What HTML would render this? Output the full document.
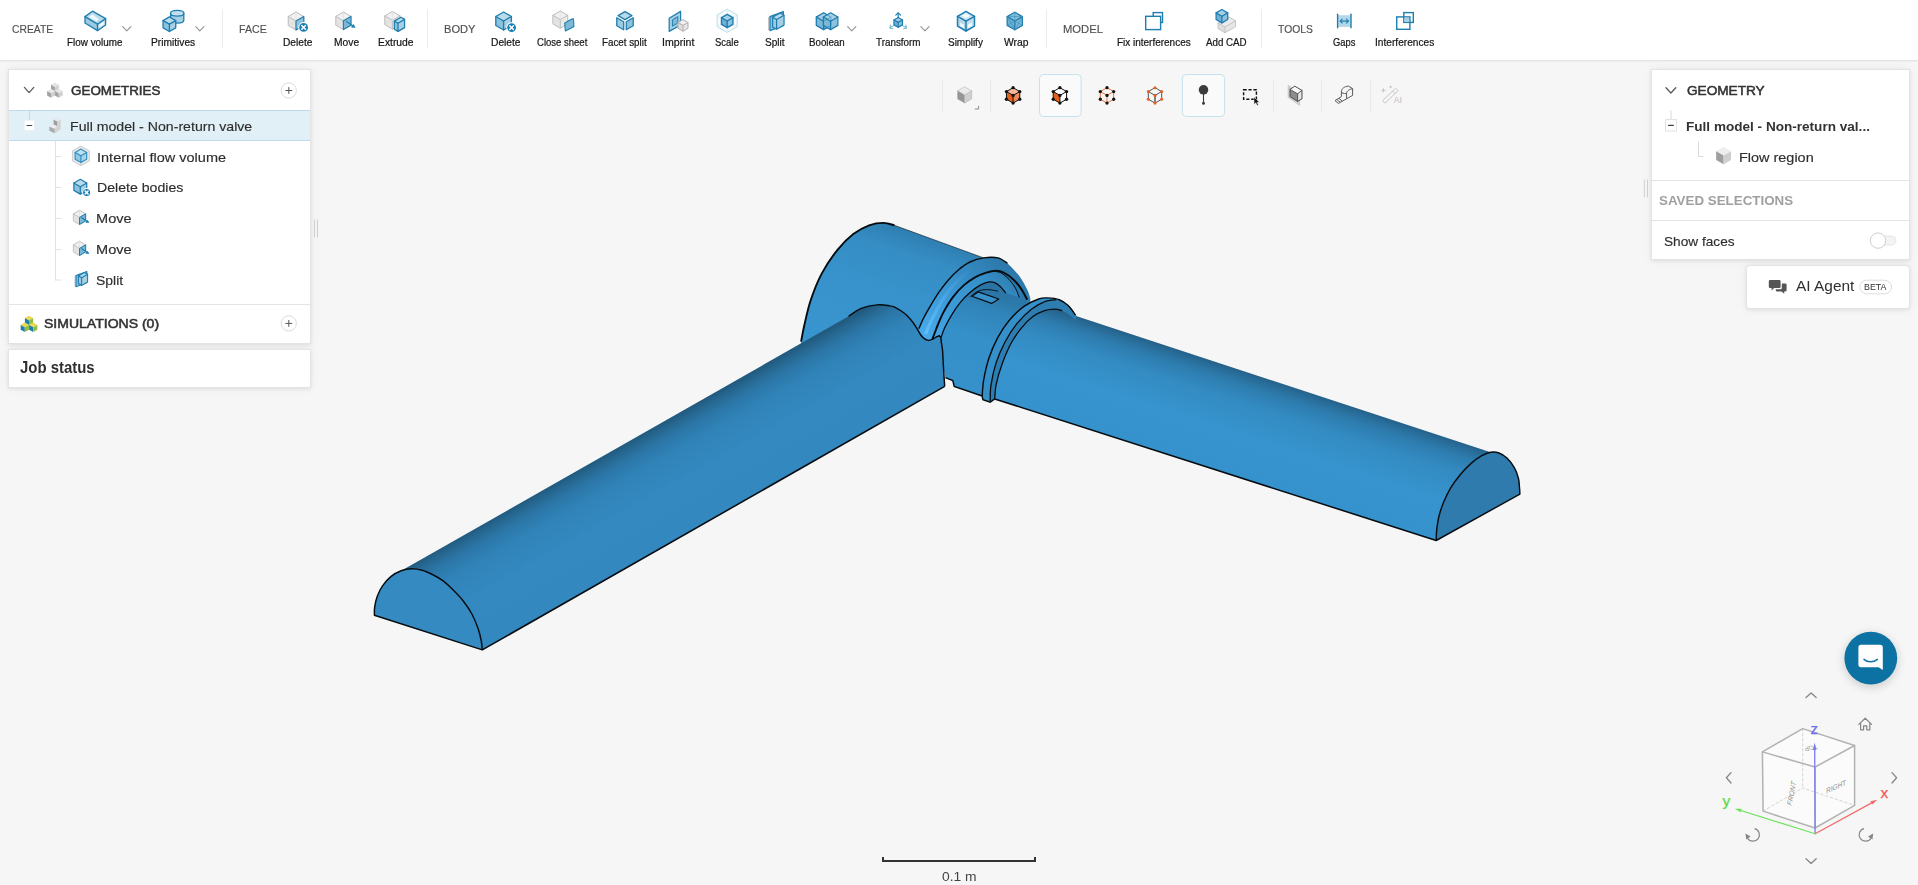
<!DOCTYPE html>
<html>
<head>
<meta charset="utf-8">
<title>CAD</title>
<style>
html,body{margin:0;padding:0;}
body{width:1918px;height:885px;overflow:hidden;background:#f6f6f6;font-family:"Liberation Sans",sans-serif;color:#333;position:relative;}
.abs{position:absolute;}
#toolbar{position:absolute;left:0;top:0;width:1918px;height:60px;background:#fff;box-shadow:0 1px 2px rgba(0,0,0,0.10);}
.grp{position:absolute;top:22px;font-size:11px;line-height:14px;color:#505050;-webkit-text-stroke:0.15px #505050;white-space:nowrap;}
.tl{position:absolute;top:36px;font-size:10px;line-height:13px;color:#151515;-webkit-text-stroke:0.2px #151515;white-space:nowrap;}
.tsep{position:absolute;top:9px;width:1px;height:39px;background:#ebebeb;}
.ico{position:absolute;overflow:visible;}
.panel{position:absolute;background:#fff;border:1px solid #e4e4e4;box-shadow:0 1px 4px rgba(0,0,0,0.09),0 0 14px rgba(0,0,0,0.035);box-sizing:border-box;}
.t13{position:absolute;font-size:13.3px;line-height:16px;white-space:nowrap;color:#2e2e2e;-webkit-text-stroke:0.15px #2e2e2e;}
.sb{color:#333;-webkit-text-stroke:0.55px #333;}
.hl{position:absolute;height:1px;background:#e4e4e4;}
.vl{position:absolute;width:1px;background:#dcdcdc;}
</style>
</head>
<body>

<!-- ============ 3D MODEL ============ -->
<svg id="model" class="abs" style="left:0;top:0" width="1918" height="885" viewBox="0 0 1918 885">
<defs>
<linearGradient id="gL" gradientUnits="userSpaceOnUse" x1="700.0" y1="526.4" x2="647.0" y2="432.3">
<stop offset="0" stop-color="#3388bf"/><stop offset="0.45" stop-color="#3389c0"/><stop offset="0.72" stop-color="#3083b8"/><stop offset="0.86" stop-color="#2b76a7"/><stop offset="0.95" stop-color="#266790"/><stop offset="1" stop-color="#225b80"/></linearGradient>
<linearGradient id="gR" gradientUnits="userSpaceOnUse" x1="1200.0" y1="465.9" x2="1232.5" y2="366.4">
<stop offset="0" stop-color="#3692cc"/><stop offset="0.4" stop-color="#3794ce"/><stop offset="0.7" stop-color="#338bc2"/><stop offset="0.86" stop-color="#2d7cae"/><stop offset="0.95" stop-color="#286b97"/><stop offset="1" stop-color="#245e85"/></linearGradient>
<linearGradient id="gB" gradientUnits="userSpaceOnUse" x1="880.0" y1="380.0" x2="931.2" y2="223.2">
<stop offset="0" stop-color="#3995cf"/><stop offset="0.5" stop-color="#3893cc"/><stop offset="0.78" stop-color="#358dc4"/><stop offset="0.9" stop-color="#2f80b3"/><stop offset="0.97" stop-color="#296e9b"/><stop offset="1" stop-color="#256289"/></linearGradient>
<linearGradient id="gN" gradientUnits="userSpaceOnUse" x1="960.0" y1="385.0" x2="991.0" y2="289.9">
<stop offset="0" stop-color="#3691cb"/><stop offset="0.5" stop-color="#3590c9"/><stop offset="0.8" stop-color="#3085ba"/><stop offset="1" stop-color="#2a74a3"/></linearGradient>
<linearGradient id="gC" gradientUnits="userSpaceOnUse" x1="925" y1="335" x2="1000" y2="258">
<stop offset="0" stop-color="#48a9ea"/><stop offset="0.35" stop-color="#3d9bd9"/><stop offset="0.7" stop-color="#3389c0"/><stop offset="1" stop-color="#2c78a9"/></linearGradient>
<linearGradient id="gF" gradientUnits="userSpaceOnUse" x1="936" y1="338" x2="1000" y2="270">
<stop offset="0" stop-color="#43a3e4"/><stop offset="0.4" stop-color="#3b99d6"/><stop offset="0.8" stop-color="#3590c9"/><stop offset="1" stop-color="#2f80b4"/></linearGradient>
<linearGradient id="gN2" gradientUnits="userSpaceOnUse" x1="985" y1="282" x2="980" y2="312">
<stop offset="0" stop-color="#2a73a3"/><stop offset="0.45" stop-color="#2b78aa"/><stop offset="1" stop-color="#3389c0" stop-opacity="0"/></linearGradient>
<linearGradient id="gH" gradientUnits="userSpaceOnUse" x1="926" y1="334" x2="972" y2="269">
<stop offset="0" stop-color="#62c0f8" stop-opacity="0.95"/><stop offset="0.5" stop-color="#52b2ee" stop-opacity="0.55"/><stop offset="1" stop-color="#48a9ea" stop-opacity="0"/></linearGradient>
</defs>
<path d="M801.1,341.6 C801.6,339.0 802.6,332.7 804.2,325.8 C805.8,318.9 807.7,309.2 810.6,300.5 C813.5,291.8 817.2,282.1 821.7,273.6 C826.2,265.2 832.2,256.4 837.5,249.8 C842.8,243.2 848.0,238.1 853.3,234.0 C858.6,229.9 864.1,227.2 869.1,225.3 C874.1,223.5 879.2,222.9 883.4,222.9 C887.6,222.9 892.6,224.9 894.4,225.3 L983.7,257.9 C981.4,258.6 974.2,260.0 970.0,262.0 C965.8,264.0 961.9,267.0 958.3,270.0 C954.7,273.0 951.6,276.3 948.4,279.9 C945.2,283.5 942.3,287.3 939.3,291.7 C936.3,296.1 932.9,301.7 930.3,306.1 C927.7,310.5 925.4,314.4 923.5,318.2 C921.6,322.0 919.6,327.0 918.8,328.8 L927.7,340.0 L900.0,360.0 L801.0,360.0 Z" fill="url(#gB)"/>
<path d="M801.1,341.6 C801.6,339.0 802.6,332.7 804.2,325.8 C805.8,318.9 807.7,309.2 810.6,300.5 C813.5,291.8 817.2,282.1 821.7,273.6 C826.2,265.2 832.2,256.4 837.5,249.8 C842.8,243.2 848.0,238.1 853.3,234.0 C858.6,229.9 864.1,227.2 869.1,225.3 C874.1,223.5 879.2,222.9 883.4,222.9 C887.6,222.9 892.6,224.9 894.4,225.3" fill="none" stroke="#060c10" stroke-width="1.9"/>
<path d="M894.4,225.3 L983.7,257.9" fill="none" stroke="#060c10" stroke-width="1" opacity="0.55"/>
<path d="M918.8,328.8 C919.6,327.0 921.6,322.0 923.5,318.2 C925.4,314.4 927.7,310.5 930.3,306.1 C932.9,301.7 936.3,296.1 939.3,291.7 C942.3,287.3 945.2,283.5 948.4,279.9 C951.6,276.3 954.7,273.0 958.3,270.0 C961.9,267.0 965.8,264.0 970.0,262.0 C974.2,260.0 979.0,258.6 983.7,257.9 C988.4,257.2 994.0,257.0 998.0,257.9 C1002.0,258.8 1004.0,260.4 1007.5,263.4 C1011.0,266.4 1016.0,271.7 1019.3,276.1 C1022.6,280.5 1025.3,285.8 1027.2,289.6 C1029.1,293.4 1029.9,297.4 1030.4,299.0 L1030.0,330.0 L940.0,350.0 L912.0,346.0 Z" fill="url(#gC)"/>
<path d="M925.6,334.0 C926.2,332.4 928.0,327.8 929.5,324.5 C931.0,321.2 932.5,318.3 934.5,314.5 C936.5,310.7 938.8,305.8 941.5,301.5 C944.2,297.2 947.2,292.5 950.5,288.5 C953.8,284.5 957.4,280.7 961.0,277.5 C964.6,274.3 970.2,270.8 972.0,269.5" fill="none" stroke="url(#gH)" stroke-width="3.2" stroke-linecap="butt"/>
<path d="M932.4,339.0 C932.9,337.6 934.6,333.3 935.6,330.6 C936.6,327.9 937.2,326.2 938.6,323.0 C940.0,319.8 941.4,315.9 943.8,311.6 C946.2,307.3 949.6,301.5 952.9,297.1 C956.2,292.7 959.9,288.7 963.7,285.4 C967.5,282.1 971.7,279.3 975.5,277.2 C979.3,275.1 982.9,273.8 986.3,272.7 C989.6,271.6 992.6,270.7 995.6,270.7 C998.6,270.7 1001.3,271.3 1004.3,272.9 C1007.3,274.4 1010.9,277.2 1013.8,280.0 C1016.7,282.8 1019.5,286.3 1021.7,289.6 C1023.9,292.9 1026.3,298.1 1027.2,299.8 L1026.0,330.0 L940.0,345.0 Z" fill="url(#gF)"/>
<path d="M986.3,272.7 C987.8,272.4 992.6,270.7 995.6,270.7 C998.6,270.7 1001.3,271.3 1004.3,272.9 C1007.3,274.4 1010.9,277.2 1013.8,280.0 C1016.7,282.8 1019.5,286.3 1021.7,289.6 C1023.9,292.9 1026.3,298.1 1027.2,299.8 L1023.0,299.0 L1019.3,297.5 C1018.6,295.9 1017.1,291.0 1015.4,288.0 C1013.7,285.0 1011.4,281.8 1009.0,279.3 C1006.6,276.8 1003.3,274.2 1001.1,272.9 C998.9,271.6 996.5,271.7 995.6,271.5 Z" fill="#2c7aad"/>
<path d="M938.9,335.5 L940.7,337.8 L941.3,350.0 L943.0,365.0 L945.4,377.6 L952.8,380.5 L954.2,386.4 L982.2,396.0 L1010.0,340.0 L1027.2,300.6 L1019.3,298.3 L1011.4,295.9 L1005.9,293.1 C1004.9,292.0 1002.0,288.0 1000.0,286.2 C998.0,284.4 996.0,283.1 994.0,282.4 C992.0,281.7 990.4,281.7 988.0,282.2 C985.6,282.7 982.8,283.7 979.8,285.4 C976.8,287.1 973.1,289.9 970.0,292.6 C966.9,295.3 964.0,298.0 961.0,301.6 C958.0,305.2 954.7,309.9 952.0,314.3 C949.3,318.7 946.5,324.0 944.7,327.8 C942.9,331.6 941.7,335.7 941.1,337.3 Z" fill="url(#gN)"/>
<path d="M961.0,301.6 C962.5,300.1 966.9,295.3 970.0,292.6 C973.1,289.9 976.8,287.1 979.8,285.4 C982.8,283.7 985.6,282.7 988.0,282.2 C990.4,281.7 992.0,281.7 994.0,282.4 C996.0,283.1 998.0,284.4 1000.0,286.2 C1002.0,288.0 1004.9,292.0 1005.9,293.1 L1027.2,300.6 L1015.0,305.0 L998.0,291.1 C996.3,290.9 991.0,289.6 987.7,289.6 C984.4,289.6 981.1,289.9 978.2,291.1 C975.3,292.3 973.3,294.2 970.3,296.7 C967.3,299.2 961.7,304.6 960.0,306.2 Z" fill="url(#gN2)"/>
<path d="M918.8,328.8 C919.6,327.0 921.6,322.0 923.5,318.2 C925.4,314.4 927.7,310.5 930.3,306.1 C932.9,301.7 936.3,296.1 939.3,291.7 C942.3,287.3 945.2,283.5 948.4,279.9 C951.6,276.3 954.7,273.0 958.3,270.0 C961.9,267.0 965.8,264.0 970.0,262.0 C974.2,260.0 979.0,258.6 983.7,257.9 C988.4,257.2 994.0,257.0 998.0,257.9 C1002.0,258.8 1005.9,262.5 1007.5,263.4" fill="none" stroke="#060c10" stroke-width="1.45"/>
<path d="M932.4,339.0 C932.9,337.6 934.6,333.3 935.6,330.6 C936.6,327.9 937.2,326.2 938.6,323.0 C940.0,319.8 941.4,315.9 943.8,311.6 C946.2,307.3 949.6,301.5 952.9,297.1 C956.2,292.7 959.9,288.7 963.7,285.4 C967.5,282.1 971.7,279.3 975.5,277.2 C979.3,275.1 982.9,273.8 986.3,272.7 C989.6,271.6 992.6,270.7 995.6,270.7 C998.6,270.7 1001.3,271.3 1004.3,272.9 C1007.3,274.4 1010.9,277.2 1013.8,280.0 C1016.7,282.8 1019.5,286.3 1021.7,289.6 C1023.9,292.9 1026.3,298.1 1027.2,299.8" fill="none" stroke="#060c10" stroke-width="1.9"/>
<path d="M995.6,271.5 C996.5,271.7 998.9,271.6 1001.1,272.9 C1003.3,274.2 1006.6,276.8 1009.0,279.3 C1011.4,281.8 1013.7,285.0 1015.4,288.0 C1017.1,291.0 1018.6,295.9 1019.3,297.5" fill="none" stroke="#060c10" stroke-width="1"/>
<path d="M941.1,337.3 C941.7,335.7 942.9,331.6 944.7,327.8 C946.5,324.0 949.3,318.7 952.0,314.3 C954.7,309.9 958.0,305.2 961.0,301.6 C964.0,298.0 966.9,295.3 970.0,292.6 C973.1,289.9 976.8,287.1 979.8,285.4 C982.8,283.7 985.6,282.7 988.0,282.2 C990.4,281.7 992.0,281.7 994.0,282.4 C996.0,283.1 998.0,284.4 1000.0,286.2 C1002.0,288.0 1004.9,292.0 1005.9,293.1" fill="none" stroke="#060c10" stroke-width="1.3"/>
<path d="M970.3,296.7 C971.6,295.8 975.3,292.3 978.2,291.1 C981.1,289.9 984.4,289.6 987.7,289.6 C991.0,289.6 996.3,290.9 998.0,291.1" fill="none" stroke="#060c10" stroke-width="0.9"/>
<path d="M971.9,296.3 L978.2,291.9 L998.8,299 L991.6,303.4 Z" fill="#3791cb" stroke="#060c10" stroke-width="1.2" stroke-linejoin="round"/>
<path d="M945.4,377.6 L952.8,380.5 L954.2,386.4 L982.2,396" fill="none" stroke="#060c10" stroke-width="1.45"/>
<path d="M982.2,396.7 C982.4,394.0 982.5,386.9 983.6,380.5 C984.7,374.1 986.5,365.6 988.8,358.5 C991.1,351.4 994.2,344.3 997.6,337.9 C1001.0,331.5 1004.9,325.6 1009.3,320.3 C1013.7,315.0 1019.1,309.9 1024.0,306.3 C1028.9,302.8 1034.8,300.4 1038.7,299.0 C1042.6,297.6 1044.1,297.8 1047.5,297.9 C1050.9,298.0 1055.9,298.4 1059.3,299.7 C1062.7,301.0 1065.4,303.0 1068.1,305.6 C1070.8,308.2 1074.3,313.5 1075.5,315.1 L1080.0,322.0 L1040.0,400.0 L994.7,398.9 L990.2,402.3 L982.9,399.6 Z" fill="#3590ca"/>
<path d="M990.2,401.0 C990.3,398.3 990.0,391.2 991.0,384.9 C992.0,378.5 993.8,370.0 996.1,362.9 C998.4,355.8 1001.5,348.8 1004.9,342.3 C1008.3,335.8 1012.3,329.4 1016.7,323.9 C1021.1,318.4 1026.5,313.0 1031.4,309.2 C1036.3,305.4 1041.8,302.8 1046.0,301.2 C1050.2,299.6 1053.2,299.5 1056.4,299.7 C1059.6,299.9 1062.5,301.0 1065.0,302.5 C1067.5,304.0 1069.6,306.2 1071.5,308.5 C1073.4,310.8 1075.7,314.8 1076.5,316.0 L1076.0,320.0 C1074.8,319.1 1071.3,316.1 1069.0,314.5 C1066.7,312.9 1064.5,311.6 1062.2,310.7 C1059.9,309.8 1057.8,309.2 1054.9,309.2 C1052.0,309.2 1048.3,309.5 1044.6,310.7 C1040.9,311.9 1036.8,313.7 1032.9,316.6 C1029.0,319.5 1024.8,323.8 1021.1,328.3 C1017.4,332.8 1014.0,337.8 1010.8,343.8 C1007.6,349.8 1004.5,357.5 1002.0,364.3 C999.5,371.1 997.3,379.1 996.1,384.9 C994.9,390.7 994.9,396.6 994.7,398.9 L990.2,401.0 Z" fill="#2e7db0"/>
<path d="M994.7,398.9 C994.9,396.6 994.9,390.7 996.1,384.9 C997.3,379.1 999.5,371.1 1002.0,364.3 C1004.5,357.5 1007.6,349.8 1010.8,343.8 C1014.0,337.8 1017.4,332.8 1021.1,328.3 C1024.8,323.8 1029.0,319.5 1032.9,316.6 C1036.8,313.7 1040.9,311.9 1044.6,310.7 C1048.3,309.5 1052.0,309.2 1054.9,309.2 C1057.8,309.2 1059.9,309.8 1062.2,310.7 C1064.5,311.6 1066.7,312.9 1069.0,314.5 C1071.3,316.1 1074.8,319.1 1076.0,320.0 L1076.0,316.0 L1488.4,451.6 L1490.8,452.2 C1489.2,452.8 1484.7,454.0 1481.4,455.9 C1478.1,457.8 1474.3,460.5 1470.8,463.6 C1467.3,466.7 1463.5,470.7 1460.2,474.7 C1456.9,478.7 1453.5,483.1 1450.8,487.6 C1448.1,492.1 1445.8,497.0 1443.8,501.7 C1441.8,506.4 1440.3,511.1 1439.1,515.8 C1437.9,520.5 1437.2,525.8 1436.7,529.9 C1436.2,534.0 1436.3,538.7 1436.2,540.5 Z" fill="url(#gR)"/>
<path d="M1436.2,540.5 C1436.3,538.7 1436.2,534.0 1436.7,529.9 C1437.2,525.8 1437.9,520.5 1439.1,515.8 C1440.3,511.1 1441.8,506.4 1443.8,501.7 C1445.8,497.0 1448.1,492.1 1450.8,487.6 C1453.5,483.1 1456.9,478.7 1460.2,474.7 C1463.5,470.7 1467.3,466.7 1470.8,463.6 C1474.3,460.5 1478.1,457.8 1481.4,455.9 C1484.7,454.0 1487.9,452.7 1490.8,452.2 C1493.7,451.7 1496.3,452.0 1499.0,453.0 C1501.7,454.0 1504.7,455.9 1507.2,458.3 C1509.8,460.8 1512.4,464.4 1514.3,467.7 C1516.2,471.0 1517.5,474.9 1518.4,478.2 C1519.3,481.5 1519.2,485.0 1519.5,487.6 C1519.8,490.2 1519.8,493.0 1519.9,494.1 Z" fill="#2f7bae" stroke="#060c10" stroke-width="1.45" stroke-linejoin="round"/>
<path d="M994.7,398.9 L1436.2,540.5" fill="none" stroke="#060c10" stroke-width="1.55"/>
<path d="M982.2,396.7 C982.4,394.0 982.5,386.9 983.6,380.5 C984.7,374.1 986.5,365.6 988.8,358.5 C991.1,351.4 994.2,344.3 997.6,337.9 C1001.0,331.5 1004.9,325.6 1009.3,320.3 C1013.7,315.0 1019.1,309.9 1024.0,306.3 C1028.9,302.8 1034.8,300.4 1038.7,299.0 C1042.6,297.6 1044.1,297.8 1047.5,297.9 C1050.9,298.0 1055.9,298.4 1059.3,299.7 C1062.7,301.0 1065.4,303.0 1068.1,305.6 C1070.8,308.2 1074.3,313.5 1075.5,315.1" fill="none" stroke="#060c10" stroke-width="1.45"/>
<path d="M990.2,401.0 C990.3,398.3 990.0,391.2 991.0,384.9 C992.0,378.5 993.8,370.0 996.1,362.9 C998.4,355.8 1001.5,348.8 1004.9,342.3 C1008.3,335.8 1012.3,329.4 1016.7,323.9 C1021.1,318.4 1026.5,313.0 1031.4,309.2 C1036.3,305.4 1041.8,302.8 1046.0,301.2 C1050.2,299.6 1054.7,299.9 1056.4,299.7" fill="none" stroke="#060c10" stroke-width="1.3"/>
<path d="M994.7,398.9 C994.9,396.6 994.9,390.7 996.1,384.9 C997.3,379.1 999.5,371.1 1002.0,364.3 C1004.5,357.5 1007.6,349.8 1010.8,343.8 C1014.0,337.8 1017.4,332.8 1021.1,328.3 C1024.8,323.8 1029.0,319.5 1032.9,316.6 C1036.8,313.7 1040.9,311.9 1044.6,310.7 C1048.3,309.5 1052.0,309.2 1054.9,309.2 C1057.8,309.2 1061.0,310.4 1062.2,310.7" fill="none" stroke="#060c10" stroke-width="1.3"/>
<path d="M982.2,396.7 L982.9,399.6 L990.2,402.3 L994.7,398.9" fill="none" stroke="#060c10" stroke-width="1.45"/>
<path d="M403.0,569.8 L848.6,316.3 C850.7,315.0 856.5,310.3 861.2,308.4 C865.9,306.5 872.2,305.3 877.0,304.9 C881.8,304.5 886.9,305.4 890.0,305.9 C893.1,306.3 893.7,306.8 895.6,307.6 C897.5,308.5 899.4,309.7 901.3,311.0 C903.2,312.3 905.0,313.7 906.9,315.5 C908.8,317.3 910.9,319.8 912.6,322.0 C914.3,324.2 915.8,326.7 917.1,328.8 C918.4,330.9 919.4,332.9 920.5,334.5 C921.6,336.1 922.6,337.4 923.9,338.4 C925.2,339.4 926.9,340.3 928.4,340.4 C929.9,340.5 931.5,339.6 932.9,339.0 C934.3,338.4 935.8,337.3 936.9,336.7 C938.0,336.1 938.8,335.8 939.2,335.6 C939.5,335.9 940.4,336.4 940.8,337.6 C941.2,338.8 941.1,340.8 941.4,342.9 C941.7,345.0 942.1,345.8 942.5,350.0 C942.9,354.2 943.1,361.9 943.5,368.0 C943.9,374.1 944.5,383.3 944.7,386.4 L482.3,649.9 C482.1,648.4 482.0,644.6 481.3,641.0 C480.6,637.4 479.7,633.0 478.1,628.5 C476.5,624.0 474.3,618.5 471.9,614.0 C469.5,609.5 466.7,605.5 463.6,601.5 C460.5,597.5 456.7,593.6 453.2,590.1 C449.7,586.6 446.3,583.3 442.8,580.7 C439.3,578.1 435.9,576.2 432.4,574.5 C428.9,572.8 425.5,571.2 422.0,570.3 C418.5,569.3 415.1,568.7 411.6,568.8 C408.1,568.9 402.9,570.5 401.2,570.8 Z" fill="url(#gL)"/>
<path d="M374.4,615.2 C374.4,613.8 374.2,609.9 374.7,606.7 C375.2,603.6 376.0,599.8 377.3,596.3 C378.6,592.8 380.2,589.2 382.5,585.9 C384.8,582.6 387.7,579.1 390.8,576.6 C393.9,574.1 397.7,572.1 401.2,570.8 C404.7,569.5 408.1,568.9 411.6,568.8 C415.1,568.7 418.5,569.3 422.0,570.3 C425.5,571.2 428.9,572.8 432.4,574.5 C435.9,576.2 439.3,578.1 442.8,580.7 C446.3,583.3 449.7,586.6 453.2,590.1 C456.7,593.6 460.5,597.5 463.6,601.5 C466.7,605.5 469.5,609.5 471.9,614.0 C474.3,618.5 476.5,624.0 478.1,628.5 C479.7,633.0 480.6,637.4 481.3,641.0 C482.0,644.6 482.1,648.4 482.3,649.9 Z" fill="#348ac1" stroke="#060c10" stroke-width="1.45" stroke-linejoin="round"/>
<path d="M482.3,649.9 L944.7,386.4" fill="none" stroke="#060c10" stroke-width="1.55"/>
<path d="M848.6,316.3 C850.7,315.0 856.5,310.3 861.2,308.4 C865.9,306.5 872.2,305.3 877.0,304.9 C881.8,304.5 886.9,305.4 890.0,305.9 C893.1,306.3 893.7,306.8 895.6,307.6 C897.5,308.5 899.4,309.7 901.3,311.0 C903.2,312.3 905.0,313.7 906.9,315.5 C908.8,317.3 910.9,319.8 912.6,322.0 C914.3,324.2 915.8,326.7 917.1,328.8 C918.4,330.9 919.4,332.9 920.5,334.5 C921.6,336.1 922.6,337.4 923.9,338.4 C925.2,339.4 926.9,340.3 928.4,340.4 C929.9,340.5 931.5,339.6 932.9,339.0 C934.3,338.4 935.8,337.3 936.9,336.7 C938.0,336.1 938.8,335.8 939.2,335.6 C939.5,335.9 940.4,336.4 940.8,337.6 C941.2,338.8 941.1,340.8 941.4,342.9 C941.7,345.0 942.1,345.8 942.5,350.0 C942.9,354.2 943.1,361.9 943.5,368.0 C943.9,374.1 944.5,383.3 944.7,386.4" fill="none" stroke="#060c10" stroke-width="1.45"/>
</svg>

<!-- ============ TOP TOOLBAR ============ -->
<div id="toolbar">

  <div class="tsep" style="left:222px"></div>


  <div class="tsep" style="left:427px"></div>









  <div class="tsep" style="left:1046px"></div>

  <div class="tsep" style="left:1261px"></div>

  <svg class="ico" style="left:0;top:0" width="1918" height="59" viewBox="0 0 1918 59"><polygon points="92.50,11.20 85.00,16.60 97.50,24.20 105.60,18.60" fill="#b9dbea" stroke="none" stroke-width="1" stroke-linejoin="round" /><polygon points="85.00,16.60 85.00,23.00 97.50,30.60 97.50,24.20" fill="#9ccbe1" stroke="none" stroke-width="1" stroke-linejoin="round" /><polygon points="97.50,24.20 97.50,30.60 105.60,25.00 105.60,18.60" fill="#c6e1ee" stroke="none" stroke-width="1" stroke-linejoin="round" /><polygon points="88.50,17.00 92.50,14.20 99.00,19.20 96.50,21.60" fill="#eef7fb" stroke="none" stroke-width="1" stroke-linejoin="round" /><polygon points="99.50,24.60 103.70,21.60 103.70,24.60 99.50,27.60" fill="#f3fafd" stroke="none" stroke-width="1" stroke-linejoin="round" /><polygon points="92.50,11.20 85.00,16.60 85.00,23.00 97.50,30.60 105.60,25.00 105.60,18.60" fill="none" stroke="#1f7eb0" stroke-width="1.35" stroke-linejoin="round" /><polyline points="85.00,16.60 97.50,24.20 105.60,18.60" fill="none" stroke="#1f7eb0" stroke-width="1.35" stroke-linejoin="round" stroke-linecap="round" /><polyline points="97.50,24.20 97.50,30.60" fill="none" stroke="#1f7eb0" stroke-width="1.35" stroke-linejoin="round" stroke-linecap="round" />
<polyline points="122.70,26.60 126.80,30.90 130.90,26.60" fill="none" stroke="#969696" stroke-width="1.15" stroke-linejoin="round" stroke-linecap="round" />
<path d="M170.6,13.2 L170.6,20.2 A6.6,2.9 0 0 0 183.8,20.2 L183.8,13.2 Z" fill="#a7d0e4" stroke="#1f7eb0" stroke-width="1.3"/><ellipse cx="177.2" cy="13.2" rx="6.6" ry="2.9" fill="#c3dfec" stroke="#1f7eb0" stroke-width="1.3"/><polygon points="169.40,24.20 163.08,20.55 169.40,16.90 175.72,20.55" fill="#b9dbea" stroke="none" stroke-width="1" stroke-linejoin="round" /><polygon points="169.40,24.20 163.08,20.55 163.08,27.85 169.40,31.50" fill="#8cc2dc" stroke="none" stroke-width="1" stroke-linejoin="round" /><polygon points="169.40,24.20 175.72,20.55 175.72,27.85 169.40,31.50" fill="#a7d0e4" stroke="none" stroke-width="1" stroke-linejoin="round" /><polygon points="163.08,20.55 169.40,16.90 175.72,20.55 175.72,27.85 169.40,31.50 163.08,27.85" fill="none" stroke="#1f7eb0" stroke-width="1.35" stroke-linejoin="round" /><polyline points="163.08,20.55 169.40,24.20 175.72,20.55" fill="none" stroke="#1f7eb0" stroke-width="1.35" stroke-linejoin="round" stroke-linecap="round" /><polyline points="169.40,24.20 169.40,31.50" fill="none" stroke="#1f7eb0" stroke-width="1.35" stroke-linejoin="round" stroke-linecap="round" />
<polyline points="195.70,26.60 199.80,30.90 203.90,26.60" fill="none" stroke="#969696" stroke-width="1.15" stroke-linejoin="round" stroke-linecap="round" />
<polygon points="296.00,21.00 288.21,16.50 296.00,12.00 303.79,16.50" fill="#f1f1f1" stroke="none" stroke-width="1" stroke-linejoin="round" /><polygon points="296.00,21.00 288.21,16.50 288.21,25.50 296.00,30.00" fill="#e4e4e4" stroke="none" stroke-width="1" stroke-linejoin="round" /><polygon points="296.00,21.00 303.79,16.50 303.79,25.50 296.00,30.00" fill="#ececec" stroke="none" stroke-width="1" stroke-linejoin="round" /><polygon points="288.21,16.50 296.00,12.00 303.79,16.50 303.79,25.50 296.00,30.00 288.21,25.50" fill="none" stroke="#bdbdbd" stroke-width="1" stroke-linejoin="round" /><polyline points="288.21,16.50 296.00,21.00 303.79,16.50" fill="none" stroke="#bdbdbd" stroke-width="1" stroke-linejoin="round" stroke-linecap="round" /><polyline points="296.00,21.00 296.00,30.00" fill="none" stroke="#bdbdbd" stroke-width="1" stroke-linejoin="round" stroke-linecap="round" /><polyline points="296.00,21.00 296.00,12.00" fill="none" stroke="#dcdcdc" stroke-width="0.6" stroke-linejoin="round" stroke-linecap="round" /><polyline points="296.00,21.00 288.21,25.50" fill="none" stroke="#dcdcdc" stroke-width="0.6" stroke-linejoin="round" stroke-linecap="round" /><polyline points="296.00,21.00 303.79,25.50" fill="none" stroke="#dcdcdc" stroke-width="0.6" stroke-linejoin="round" stroke-linecap="round" /><polygon points="296.00,21.00 303.80,16.50 303.80,25.50 296.00,30.00" fill="#8fc3dc" stroke="#1f7eb0" stroke-width="1.1" stroke-linejoin="round" /><circle cx="303.60" cy="27.40" r="5.30" fill="#fff"/><circle cx="303.60" cy="27.40" r="4.40" fill="#1b7db1"/><polyline points="301.75,25.55 305.45,29.25" fill="none" stroke="#fff" stroke-width="1.5" stroke-linejoin="round" stroke-linecap="round" /><polyline points="301.75,29.25 305.45,25.55" fill="none" stroke="#fff" stroke-width="1.5" stroke-linejoin="round" stroke-linecap="round" />
<polygon points="343.40,20.80 335.78,16.40 343.40,12.00 351.02,16.40" fill="#f1f1f1" stroke="none" stroke-width="1" stroke-linejoin="round" /><polygon points="343.40,20.80 335.78,16.40 335.78,25.20 343.40,29.60" fill="#e4e4e4" stroke="none" stroke-width="1" stroke-linejoin="round" /><polygon points="343.40,20.80 351.02,16.40 351.02,25.20 343.40,29.60" fill="#ececec" stroke="none" stroke-width="1" stroke-linejoin="round" /><polygon points="335.78,16.40 343.40,12.00 351.02,16.40 351.02,25.20 343.40,29.60 335.78,25.20" fill="none" stroke="#bdbdbd" stroke-width="1" stroke-linejoin="round" /><polyline points="335.78,16.40 343.40,20.80 351.02,16.40" fill="none" stroke="#bdbdbd" stroke-width="1" stroke-linejoin="round" stroke-linecap="round" /><polyline points="343.40,20.80 343.40,29.60" fill="none" stroke="#bdbdbd" stroke-width="1" stroke-linejoin="round" stroke-linecap="round" /><polyline points="343.40,20.80 343.40,12.00" fill="none" stroke="#dcdcdc" stroke-width="0.6" stroke-linejoin="round" stroke-linecap="round" /><polyline points="343.40,20.80 335.78,25.20" fill="none" stroke="#dcdcdc" stroke-width="0.6" stroke-linejoin="round" stroke-linecap="round" /><polyline points="343.40,20.80 351.02,25.20" fill="none" stroke="#dcdcdc" stroke-width="0.6" stroke-linejoin="round" stroke-linecap="round" /><polygon points="343.40,20.80 351.00,16.40 351.00,25.20 343.40,29.60" fill="#7db9d6" stroke="#1f7eb0" stroke-width="1.1" stroke-linejoin="round" /><polyline points="346.50,21.50 353.50,26.20" fill="none" stroke="#1f7eb0" stroke-width="1.1" stroke-linejoin="round" stroke-linecap="round" /><polygon points="355.20,27.40 351.40,27.20 353.40,24.40" fill="#1f7eb0" stroke="#1f7eb0" stroke-width="0.6" stroke-linejoin="round" />
<polygon points="392.40,20.30 384.78,15.90 392.40,11.50 400.02,15.90" fill="#f1f1f1" stroke="none" stroke-width="1" stroke-linejoin="round" /><polygon points="392.40,20.30 384.78,15.90 384.78,24.70 392.40,29.10" fill="#e4e4e4" stroke="none" stroke-width="1" stroke-linejoin="round" /><polygon points="392.40,20.30 400.02,15.90 400.02,24.70 392.40,29.10" fill="#ececec" stroke="none" stroke-width="1" stroke-linejoin="round" /><polygon points="384.78,15.90 392.40,11.50 400.02,15.90 400.02,24.70 392.40,29.10 384.78,24.70" fill="none" stroke="#bdbdbd" stroke-width="1" stroke-linejoin="round" /><polyline points="384.78,15.90 392.40,20.30 400.02,15.90" fill="none" stroke="#bdbdbd" stroke-width="1" stroke-linejoin="round" stroke-linecap="round" /><polyline points="392.40,20.30 392.40,29.10" fill="none" stroke="#bdbdbd" stroke-width="1" stroke-linejoin="round" stroke-linecap="round" /><polyline points="392.40,20.30 392.40,11.50" fill="none" stroke="#dcdcdc" stroke-width="0.6" stroke-linejoin="round" stroke-linecap="round" /><polyline points="392.40,20.30 384.78,24.70" fill="none" stroke="#dcdcdc" stroke-width="0.6" stroke-linejoin="round" stroke-linecap="round" /><polyline points="392.40,20.30 400.02,24.70" fill="none" stroke="#dcdcdc" stroke-width="0.6" stroke-linejoin="round" stroke-linecap="round" /><polygon points="398.00,23.20 394.36,21.10 400.94,17.30 404.58,19.40" fill="#b9dbea" stroke="none" stroke-width="1" stroke-linejoin="round" /><polygon points="398.00,23.20 394.36,21.10 394.36,29.30 398.00,31.40" fill="#8cc2dc" stroke="none" stroke-width="1" stroke-linejoin="round" /><polygon points="398.00,23.20 404.58,19.40 404.58,27.60 398.00,31.40" fill="#a7d0e4" stroke="none" stroke-width="1" stroke-linejoin="round" /><polygon points="394.36,21.10 400.94,17.30 404.58,19.40 404.58,27.60 398.00,31.40 394.36,29.30" fill="none" stroke="#1f7eb0" stroke-width="1.25" stroke-linejoin="round" /><polyline points="394.36,21.10 398.00,23.20 404.58,19.40" fill="none" stroke="#1f7eb0" stroke-width="1.25" stroke-linejoin="round" stroke-linecap="round" /><polyline points="398.00,23.20 398.00,31.40" fill="none" stroke="#1f7eb0" stroke-width="1.25" stroke-linejoin="round" stroke-linecap="round" />
<polygon points="503.60,21.00 495.81,16.50 503.60,12.00 511.39,16.50" fill="#b9dbea" stroke="none" stroke-width="1" stroke-linejoin="round" /><polygon points="503.60,21.00 495.81,16.50 495.81,25.50 503.60,30.00" fill="#8cc2dc" stroke="none" stroke-width="1" stroke-linejoin="round" /><polygon points="503.60,21.00 511.39,16.50 511.39,25.50 503.60,30.00" fill="#a7d0e4" stroke="none" stroke-width="1" stroke-linejoin="round" /><polygon points="495.81,16.50 503.60,12.00 511.39,16.50 511.39,25.50 503.60,30.00 495.81,25.50" fill="none" stroke="#1f7eb0" stroke-width="1.35" stroke-linejoin="round" /><polyline points="495.81,16.50 503.60,21.00 511.39,16.50" fill="none" stroke="#1f7eb0" stroke-width="1.35" stroke-linejoin="round" stroke-linecap="round" /><polyline points="503.60,21.00 503.60,30.00" fill="none" stroke="#1f7eb0" stroke-width="1.35" stroke-linejoin="round" stroke-linecap="round" /><circle cx="511.60" cy="27.60" r="5.30" fill="#fff"/><circle cx="511.60" cy="27.60" r="4.40" fill="#1b7db1"/><polyline points="509.75,25.75 513.45,29.45" fill="none" stroke="#fff" stroke-width="1.5" stroke-linejoin="round" stroke-linecap="round" /><polyline points="509.75,29.45 513.45,25.75" fill="none" stroke="#fff" stroke-width="1.5" stroke-linejoin="round" stroke-linecap="round" />
<polygon points="560.30,19.60 552.85,15.30 560.30,11.00 567.75,15.30" fill="#f1f1f1" stroke="none" stroke-width="1" stroke-linejoin="round" /><polygon points="560.30,19.60 552.85,15.30 552.85,23.90 560.30,28.20" fill="#e4e4e4" stroke="none" stroke-width="1" stroke-linejoin="round" /><polygon points="560.30,19.60 567.75,15.30 567.75,23.90 560.30,28.20" fill="#ececec" stroke="none" stroke-width="1" stroke-linejoin="round" /><polygon points="552.85,15.30 560.30,11.00 567.75,15.30 567.75,23.90 560.30,28.20 552.85,23.90" fill="none" stroke="#bdbdbd" stroke-width="1" stroke-linejoin="round" /><polyline points="552.85,15.30 560.30,19.60 567.75,15.30" fill="none" stroke="#bdbdbd" stroke-width="1" stroke-linejoin="round" stroke-linecap="round" /><polyline points="560.30,19.60 560.30,28.20" fill="none" stroke="#bdbdbd" stroke-width="1" stroke-linejoin="round" stroke-linecap="round" /><polyline points="560.30,19.60 560.30,11.00" fill="none" stroke="#dcdcdc" stroke-width="0.6" stroke-linejoin="round" stroke-linecap="round" /><polyline points="560.30,19.60 552.85,23.90" fill="none" stroke="#dcdcdc" stroke-width="0.6" stroke-linejoin="round" stroke-linecap="round" /><polyline points="560.30,19.60 567.75,23.90" fill="none" stroke="#dcdcdc" stroke-width="0.6" stroke-linejoin="round" stroke-linecap="round" /><path d="M564.6,23.2 C567,21.6 570,20 573.2,18.6 C574.2,21 573.4,24 574,26.4 C571,28 568,29.6 565.4,31 C564.6,28.6 565.4,25.6 564.6,23.2 Z" fill="#7db9d6" stroke="#1f7eb0" stroke-width="1.1" stroke-linejoin="round"/>
<polygon points="625.00,19.60 618.07,15.60 625.00,11.60 631.93,15.60" fill="#b9dbea" stroke="#1f7eb0" stroke-width="1.3" stroke-linejoin="round" /><polygon points="623.70,21.80 616.77,17.80 616.77,25.80 623.70,29.80" fill="#9ccbe1" stroke="#1f7eb0" stroke-width="1.3" stroke-linejoin="round" /><polygon points="626.30,21.80 633.23,17.80 633.23,25.80 626.30,29.80" fill="#8cc2dc" stroke="#1f7eb0" stroke-width="1.3" stroke-linejoin="round" />
<polygon points="669.20,18.20 680.60,11.40 680.60,25.00 669.20,31.40" fill="#a7d0e4" stroke="#1f7eb0" stroke-width="1.25" stroke-linejoin="round" /><polygon points="672.40,19.80 677.80,16.60 677.80,23.00 672.40,26.20" fill="#7db9d6" stroke="#1f7eb0" stroke-width="1.0" stroke-linejoin="round" /><polygon points="683.00,25.40 677.98,22.50 683.00,19.60 688.02,22.50" fill="#efefef" stroke="none" stroke-width="1" stroke-linejoin="round" /><polygon points="683.00,25.40 677.98,22.50 677.98,28.30 683.00,31.20" fill="#dcdcdc" stroke="none" stroke-width="1" stroke-linejoin="round" /><polygon points="683.00,25.40 688.02,22.50 688.02,28.30 683.00,31.20" fill="#e6e6e6" stroke="none" stroke-width="1" stroke-linejoin="round" /><polygon points="677.98,22.50 683.00,19.60 688.02,22.50 688.02,28.30 683.00,31.20 677.98,28.30" fill="none" stroke="#b0b0b0" stroke-width="1.0" stroke-linejoin="round" /><polyline points="677.98,22.50 683.00,25.40 688.02,22.50" fill="none" stroke="#b0b0b0" stroke-width="1.0" stroke-linejoin="round" stroke-linecap="round" /><polyline points="683.00,25.40 683.00,31.20" fill="none" stroke="#b0b0b0" stroke-width="1.0" stroke-linejoin="round" stroke-linecap="round" />
<polygon points="727.20,9.20 737.25,15.00 737.25,26.60 727.20,32.40 717.15,26.60 717.15,15.00" fill="#f6fbfd" stroke="#b5d9ea" stroke-width="0.9" stroke-linejoin="round" /><polyline points="727.20,9.20 727.20,32.40" fill="none" stroke="#d3e8f2" stroke-width="0.7" stroke-linejoin="round" stroke-linecap="round" /><polyline points="717.15,15.00 737.25,26.60" fill="none" stroke="#d3e8f2" stroke-width="0.7" stroke-linejoin="round" stroke-linecap="round" /><polyline points="717.15,26.60 737.25,15.00" fill="none" stroke="#d3e8f2" stroke-width="0.7" stroke-linejoin="round" stroke-linecap="round" /><polygon points="727.20,21.00 721.48,17.70 727.20,14.40 732.92,17.70" fill="#a7d0e4" stroke="none" stroke-width="1" stroke-linejoin="round" /><polygon points="727.20,21.00 721.48,17.70 721.48,24.30 727.20,27.60" fill="#6fb0d3" stroke="none" stroke-width="1" stroke-linejoin="round" /><polygon points="727.20,21.00 732.92,17.70 732.92,24.30 727.20,27.60" fill="#8cc2dc" stroke="none" stroke-width="1" stroke-linejoin="round" /><polygon points="721.48,17.70 727.20,14.40 732.92,17.70 732.92,24.30 727.20,27.60 721.48,24.30" fill="none" stroke="#1f7eb0" stroke-width="1.4" stroke-linejoin="round" /><polyline points="721.48,17.70 727.20,21.00 732.92,17.70" fill="none" stroke="#1f7eb0" stroke-width="1.4" stroke-linejoin="round" stroke-linecap="round" /><polyline points="727.20,21.00 727.20,27.60" fill="none" stroke="#1f7eb0" stroke-width="1.4" stroke-linejoin="round" stroke-linecap="round" />
<polygon points="768.60,17.60 775.00,14.40 775.00,27.00 768.60,30.00" fill="#e0e0e0" stroke="#b9b9b9" stroke-width="0.9" stroke-linejoin="round" /><polygon points="770.00,16.60 783.40,11.60 783.40,25.60 770.00,30.60" fill="#8cc2dc" stroke="#1f7eb0" stroke-width="1.2" stroke-linejoin="round" /><polygon points="776.60,19.60 772.62,17.30 780.06,13.00 784.05,15.30" fill="#b9dbea" stroke="none" stroke-width="1" stroke-linejoin="round" /><polygon points="776.60,19.60 772.62,17.30 772.62,26.90 776.60,29.20" fill="#9ccbe1" stroke="none" stroke-width="1" stroke-linejoin="round" /><polygon points="776.60,19.60 784.05,15.30 784.05,24.90 776.60,29.20" fill="#a7d0e4" stroke="none" stroke-width="1" stroke-linejoin="round" /><polygon points="772.62,17.30 780.06,13.00 784.05,15.30 784.05,24.90 776.60,29.20 772.62,26.90" fill="none" stroke="#1f7eb0" stroke-width="1.2" stroke-linejoin="round" /><polyline points="772.62,17.30 776.60,19.60 784.05,15.30" fill="none" stroke="#1f7eb0" stroke-width="1.2" stroke-linejoin="round" stroke-linecap="round" /><polyline points="776.60,19.60 776.60,29.20" fill="none" stroke="#1f7eb0" stroke-width="1.2" stroke-linejoin="round" stroke-linecap="round" />
<polygon points="823.60,21.20 816.33,17.00 823.60,12.80 830.87,17.00" fill="#a7d0e4" stroke="none" stroke-width="1" stroke-linejoin="round" /><polygon points="823.60,21.20 816.33,17.00 816.33,25.40 823.60,29.60" fill="#7db9d6" stroke="none" stroke-width="1" stroke-linejoin="round" /><polygon points="823.60,21.20 830.87,17.00 830.87,25.40 823.60,29.60" fill="#8cc2dc" stroke="none" stroke-width="1" stroke-linejoin="round" /><polygon points="816.33,17.00 823.60,12.80 830.87,17.00 830.87,25.40 823.60,29.60 816.33,25.40" fill="none" stroke="#1f7eb0" stroke-width="1.25" stroke-linejoin="round" /><polyline points="816.33,17.00 823.60,21.20 830.87,17.00" fill="none" stroke="#1f7eb0" stroke-width="1.25" stroke-linejoin="round" stroke-linecap="round" /><polyline points="823.60,21.20 823.60,29.60" fill="none" stroke="#1f7eb0" stroke-width="1.25" stroke-linejoin="round" stroke-linecap="round" /><polygon points="830.60,21.20 823.33,17.00 830.60,12.80 837.87,17.00" fill="#a7d0e4" stroke="none" stroke-width="1" stroke-linejoin="round" /><polygon points="830.60,21.20 823.33,17.00 823.33,25.40 830.60,29.60" fill="#7db9d6" stroke="none" stroke-width="1" stroke-linejoin="round" /><polygon points="830.60,21.20 837.87,17.00 837.87,25.40 830.60,29.60" fill="#8cc2dc" stroke="none" stroke-width="1" stroke-linejoin="round" /><polygon points="823.33,17.00 830.60,12.80 837.87,17.00 837.87,25.40 830.60,29.60 823.33,25.40" fill="none" stroke="#1f7eb0" stroke-width="1.25" stroke-linejoin="round" /><polyline points="823.33,17.00 830.60,21.20 837.87,17.00" fill="none" stroke="#1f7eb0" stroke-width="1.25" stroke-linejoin="round" stroke-linecap="round" /><polyline points="830.60,21.20 830.60,29.60" fill="none" stroke="#1f7eb0" stroke-width="1.25" stroke-linejoin="round" stroke-linecap="round" /><g opacity="0.55"><polygon points="823.60,21.20 816.33,17.00 823.60,12.80 830.87,17.00" fill="none" stroke="none" stroke-width="1" stroke-linejoin="round" /><polygon points="823.60,21.20 816.33,17.00 816.33,25.40 823.60,29.60" fill="none" stroke="none" stroke-width="1" stroke-linejoin="round" /><polygon points="823.60,21.20 830.87,17.00 830.87,25.40 823.60,29.60" fill="none" stroke="none" stroke-width="1" stroke-linejoin="round" /><polygon points="816.33,17.00 823.60,12.80 830.87,17.00 830.87,25.40 823.60,29.60 816.33,25.40" fill="none" stroke="#1f7eb0" stroke-width="1.0" stroke-linejoin="round" /><polyline points="816.33,17.00 823.60,21.20 830.87,17.00" fill="none" stroke="#1f7eb0" stroke-width="1.0" stroke-linejoin="round" stroke-linecap="round" /><polyline points="823.60,21.20 823.60,29.60" fill="none" stroke="#1f7eb0" stroke-width="1.0" stroke-linejoin="round" stroke-linecap="round" /></g>
<polyline points="847.65,26.60 851.75,30.90 855.85,26.60" fill="none" stroke="#969696" stroke-width="1.15" stroke-linejoin="round" stroke-linecap="round" />
<polyline points="898.20,18.40 898.20,13.20" fill="none" stroke="#1f7eb0" stroke-width="1.2" stroke-linejoin="round" stroke-linecap="round" /><polyline points="895.80,15.20 898.20,12.80 900.60,15.20" fill="none" stroke="#1f7eb0" stroke-width="1.2" stroke-linejoin="round" stroke-linecap="round" /><polyline points="894.20,25.40 890.20,27.80" fill="none" stroke="#7db9d6" stroke-width="1.1" stroke-linejoin="round" stroke-linecap="round" /><polyline points="890.60,25.00 889.80,28.00 892.80,28.80" fill="none" stroke="#7db9d6" stroke-width="1.1" stroke-linejoin="round" stroke-linecap="round" /><polyline points="902.20,25.40 906.20,27.80" fill="none" stroke="#7db9d6" stroke-width="1.1" stroke-linejoin="round" stroke-linecap="round" /><polyline points="905.80,25.00 906.60,28.00 903.60,28.80" fill="none" stroke="#7db9d6" stroke-width="1.1" stroke-linejoin="round" stroke-linecap="round" /><polygon points="898.20,22.40 893.96,19.95 898.20,17.50 902.44,19.95" fill="#a7d0e4" stroke="none" stroke-width="1" stroke-linejoin="round" /><polygon points="898.20,22.40 893.96,19.95 893.96,24.85 898.20,27.30" fill="#6fb0d3" stroke="none" stroke-width="1" stroke-linejoin="round" /><polygon points="898.20,22.40 902.44,19.95 902.44,24.85 898.20,27.30" fill="#8cc2dc" stroke="none" stroke-width="1" stroke-linejoin="round" /><polygon points="893.96,19.95 898.20,17.50 902.44,19.95 902.44,24.85 898.20,27.30 893.96,24.85" fill="none" stroke="#1f7eb0" stroke-width="1.25" stroke-linejoin="round" /><polyline points="893.96,19.95 898.20,22.40 902.44,19.95" fill="none" stroke="#1f7eb0" stroke-width="1.25" stroke-linejoin="round" stroke-linecap="round" /><polyline points="898.20,22.40 898.20,27.30" fill="none" stroke="#1f7eb0" stroke-width="1.25" stroke-linejoin="round" stroke-linecap="round" />
<polyline points="920.90,26.60 925.00,30.90 929.10,26.60" fill="none" stroke="#969696" stroke-width="1.15" stroke-linejoin="round" stroke-linecap="round" />
<polygon points="966.00,21.20 957.51,16.30 966.00,11.40 974.49,16.30" fill="#cfe5f0" stroke="none" stroke-width="1" stroke-linejoin="round" /><polygon points="966.00,21.20 957.51,16.30 957.51,26.10 966.00,31.00" fill="#b2d6e7" stroke="none" stroke-width="1" stroke-linejoin="round" /><polygon points="966.00,21.20 974.49,16.30 974.49,26.10 966.00,31.00" fill="#c3dfec" stroke="none" stroke-width="1" stroke-linejoin="round" /><polygon points="957.51,16.30 966.00,11.40 974.49,16.30 974.49,26.10 966.00,31.00 957.51,26.10" fill="none" stroke="#1f7eb0" stroke-width="1.5" stroke-linejoin="round" /><polyline points="957.51,16.30 966.00,21.20 974.49,16.30" fill="none" stroke="#1f7eb0" stroke-width="1.5" stroke-linejoin="round" stroke-linecap="round" /><polyline points="966.00,21.20 966.00,31.00" fill="none" stroke="#1f7eb0" stroke-width="1.5" stroke-linejoin="round" stroke-linecap="round" /><polygon points="960.00,22.40 964.00,24.60 964.00,28.20 960.00,26.00" fill="#eaf4f9" stroke="none" stroke-width="1" stroke-linejoin="round" /><polygon points="968.00,24.60 972.00,22.40 972.00,26.00 968.00,28.20" fill="#f2f9fc" stroke="none" stroke-width="1" stroke-linejoin="round" /><polygon points="966.00,13.40 970.00,15.80 966.00,18.20 962.00,15.80" fill="#f2f9fc" stroke="none" stroke-width="1" stroke-linejoin="round" />
<polygon points="1014.80,21.00 1007.18,16.60 1014.80,12.20 1022.42,16.60" fill="#8cc2dc" stroke="none" stroke-width="1" stroke-linejoin="round" /><polygon points="1014.80,21.00 1007.18,16.60 1007.18,25.40 1014.80,29.80" fill="#6fb0d3" stroke="none" stroke-width="1" stroke-linejoin="round" /><polygon points="1014.80,21.00 1022.42,16.60 1022.42,25.40 1014.80,29.80" fill="#7db9d6" stroke="none" stroke-width="1" stroke-linejoin="round" /><polygon points="1007.18,16.60 1014.80,12.20 1022.42,16.60 1022.42,25.40 1014.80,29.80 1007.18,25.40" fill="none" stroke="#1f7eb0" stroke-width="1.3" stroke-linejoin="round" /><polyline points="1007.18,16.60 1014.80,21.00 1022.42,16.60" fill="none" stroke="#1f7eb0" stroke-width="1.3" stroke-linejoin="round" stroke-linecap="round" /><polyline points="1014.80,21.00 1014.80,29.80" fill="none" stroke="#1f7eb0" stroke-width="1.3" stroke-linejoin="round" stroke-linecap="round" /><polyline points="1007.18,16.60 1014.80,29.80" fill="none" stroke="#3f93bf" stroke-width="0.7" stroke-linejoin="round" stroke-linecap="round" /><polyline points="1014.80,21.00 1007.18,25.40" fill="none" stroke="#3f93bf" stroke-width="0.7" stroke-linejoin="round" stroke-linecap="round" /><polyline points="1022.42,16.60 1014.80,29.80" fill="none" stroke="#3f93bf" stroke-width="0.7" stroke-linejoin="round" stroke-linecap="round" /><polyline points="1014.80,21.00 1022.42,25.40" fill="none" stroke="#3f93bf" stroke-width="0.7" stroke-linejoin="round" stroke-linecap="round" /><polyline points="1007.18,16.60 1022.42,16.60" fill="none" stroke="#3f93bf" stroke-width="0.7" stroke-linejoin="round" stroke-linecap="round" /><polyline points="1014.80,12.20 1014.80,21.00" fill="none" stroke="#3f93bf" stroke-width="0.7" stroke-linejoin="round" stroke-linecap="round" />
<rect x="1153.2" y="12.6" width="9.3" height="9.9" fill="#fff" stroke="#1f7eb0" stroke-width="1.4"/><rect x="1145.7" y="16.3" width="14.9" height="13.3" fill="#fff" stroke="#1f7eb0" stroke-width="1.4"/>
<polygon points="1225.00,27.00 1218.07,23.00 1228.64,16.90 1235.57,20.90" fill="#ebebeb" stroke="none" stroke-width="1" stroke-linejoin="round" /><polygon points="1225.00,27.00 1218.07,23.00 1218.07,28.70 1225.00,32.70" fill="#dedede" stroke="none" stroke-width="1" stroke-linejoin="round" /><polygon points="1225.00,27.00 1235.57,20.90 1235.57,26.60 1225.00,32.70" fill="#e6e6e6" stroke="none" stroke-width="1" stroke-linejoin="round" /><polygon points="1218.07,23.00 1228.64,16.90 1235.57,20.90 1235.57,26.60 1225.00,32.70 1218.07,28.70" fill="none" stroke="#c4c4c4" stroke-width="1.0" stroke-linejoin="round" /><polyline points="1218.07,23.00 1225.00,27.00 1235.57,20.90" fill="none" stroke="#c4c4c4" stroke-width="1.0" stroke-linejoin="round" stroke-linecap="round" /><polyline points="1225.00,27.00 1225.00,32.70" fill="none" stroke="#c4c4c4" stroke-width="1.0" stroke-linejoin="round" stroke-linecap="round" /><polygon points="1221.90,16.20 1216.10,12.85 1221.90,9.50 1227.70,12.85" fill="#a7d0e4" stroke="none" stroke-width="1" stroke-linejoin="round" /><polygon points="1221.90,16.20 1216.10,12.85 1216.10,19.55 1221.90,22.90" fill="#6fb0d3" stroke="none" stroke-width="1" stroke-linejoin="round" /><polygon points="1221.90,16.20 1227.70,12.85 1227.70,19.55 1221.90,22.90" fill="#8cc2dc" stroke="none" stroke-width="1" stroke-linejoin="round" /><polygon points="1216.10,12.85 1221.90,9.50 1227.70,12.85 1227.70,19.55 1221.90,22.90 1216.10,19.55" fill="none" stroke="#1f7eb0" stroke-width="1.3" stroke-linejoin="round" /><polyline points="1216.10,12.85 1221.90,16.20 1227.70,12.85" fill="none" stroke="#1f7eb0" stroke-width="1.3" stroke-linejoin="round" stroke-linecap="round" /><polyline points="1221.90,16.20 1221.90,22.90" fill="none" stroke="#1f7eb0" stroke-width="1.3" stroke-linejoin="round" stroke-linecap="round" />
<rect x="1337.6" y="15.2" width="13.4" height="11.8" fill="#b5d8e8"/><polyline points="1337.60,14.20 1337.60,27.80" fill="none" stroke="#1f7eb0" stroke-width="1.4" stroke-linejoin="round" stroke-linecap="round" /><polyline points="1351.00,14.20 1351.00,27.80" fill="none" stroke="#1f7eb0" stroke-width="1.4" stroke-linejoin="round" stroke-linecap="round" /><polyline points="1340.20,21.10 1348.40,21.10" fill="none" stroke="#1f7eb0" stroke-width="1.1" stroke-linejoin="round" stroke-linecap="round" /><polyline points="1342.20,19.10 1340.20,21.10 1342.20,23.10" fill="none" stroke="#1f7eb0" stroke-width="1.1" stroke-linejoin="round" stroke-linecap="round" /><polyline points="1346.40,19.10 1348.40,21.10 1346.40,23.10" fill="none" stroke="#1f7eb0" stroke-width="1.1" stroke-linejoin="round" stroke-linecap="round" />
<rect x="1403.8" y="12.6" width="9.5" height="9.8" fill="none" stroke="#1f7eb0" stroke-width="1.4"/><rect x="1396.7" y="16.9" width="13.2" height="12.4" fill="none" stroke="#1f7eb0" stroke-width="1.4"/><rect x="1404.5" y="17.6" width="4.7" height="4.1" fill="#a7d0e4"/></svg>
</div>

<!-- ============ LEFT PANEL ============ -->
<div class="panel" id="lp" style="left:8px;top:69px;width:303px;height:275px;"></div>
<div class="abs" style="left:9px;top:110px;width:301px;height:31px;background:#e1eff6;border-top:1px solid #bcdcec;border-bottom:1px solid #bcdcec;box-sizing:border-box;"></div>






<div class="hl" style="left:9px;top:304px;width:301px;"></div>
<div class="panel" id="jp" style="left:8px;top:349px;width:303px;height:39px;"></div>
<svg class="ico" style="left:0;top:0;position:absolute" width="330" height="400" viewBox="0 0 330 400"><polyline points="24.40,87.40 29.10,92.60 33.80,87.40" fill="none" stroke="#5a5a5a" stroke-width="1.3" stroke-linejoin="round" stroke-linecap="round" />
<polygon points="54.90,86.90 51.00,84.65 54.90,82.40 58.80,84.65" fill="#e6e6e6" stroke="none" stroke-width="1" stroke-linejoin="round" /><polygon points="54.90,86.90 51.00,84.65 51.00,89.15 54.90,91.40" fill="#a2a2a2" stroke="none" stroke-width="1" stroke-linejoin="round" /><polygon points="54.90,86.90 58.80,84.65 58.80,89.15 54.90,91.40" fill="#d0d0d0" stroke="none" stroke-width="1" stroke-linejoin="round" />
<polygon points="51.00,93.30 47.10,91.05 51.00,88.80 54.90,91.05" fill="#e6e6e6" stroke="none" stroke-width="1" stroke-linejoin="round" /><polygon points="51.00,93.30 47.10,91.05 47.10,95.55 51.00,97.80" fill="#a2a2a2" stroke="none" stroke-width="1" stroke-linejoin="round" /><polygon points="51.00,93.30 54.90,91.05 54.90,95.55 51.00,97.80" fill="#d0d0d0" stroke="none" stroke-width="1" stroke-linejoin="round" />
<polygon points="58.80,93.30 54.90,91.05 58.80,88.80 62.70,91.05" fill="#e6e6e6" stroke="none" stroke-width="1" stroke-linejoin="round" /><polygon points="58.80,93.30 54.90,91.05 54.90,95.55 58.80,97.80" fill="#a2a2a2" stroke="none" stroke-width="1" stroke-linejoin="round" /><polygon points="58.80,93.30 62.70,91.05 62.70,95.55 58.80,97.80" fill="#d0d0d0" stroke="none" stroke-width="1" stroke-linejoin="round" />
<circle cx="288.8" cy="90.5" r="7.6" fill="#fff" stroke="#dcdcdc" stroke-width="1"/><polyline points="285.80,90.50 291.80,90.50" fill="none" stroke="#555" stroke-width="1" stroke-linejoin="round" stroke-linecap="round" /><polyline points="288.80,87.50 288.80,93.50" fill="none" stroke="#555" stroke-width="1" stroke-linejoin="round" stroke-linecap="round" />
<polyline points="29.50,111.00 29.50,120.00" fill="none" stroke="#c9d6dc" stroke-width="1" stroke-linejoin="round" stroke-linecap="round" />
<rect x="24.2" y="120.2" width="10.4" height="10.4" fill="#fff" stroke="#e3ecf0" stroke-width="0.6"/>
<polyline points="27.00,125.50 31.80,125.50" fill="none" stroke="#444" stroke-width="1.2" stroke-linejoin="round" stroke-linecap="round" />
<polygon points="53.60,119.40 57.40,121.40 57.40,126.60 53.60,124.60" fill="#9d9d9d" stroke="none" stroke-width="1" stroke-linejoin="round" /><polygon points="53.60,119.40 56.80,117.90 60.60,119.80 57.40,121.40" fill="#e8e8e8" stroke="none" stroke-width="1" stroke-linejoin="round" /><polygon points="57.40,121.40 60.60,119.80 60.60,129.40 54.60,133.20 54.60,127.90 57.40,126.60" fill="#d2d2d2" stroke="none" stroke-width="1" stroke-linejoin="round" /><polygon points="49.40,126.40 53.60,124.60 57.40,126.60 54.60,127.90 53.20,128.40" fill="#ececec" stroke="none" stroke-width="1" stroke-linejoin="round" /><polygon points="49.40,126.40 54.60,128.90 54.60,133.20 49.40,130.80" fill="#ababab" stroke="none" stroke-width="1" stroke-linejoin="round" />
<polyline points="55.50,141.00 55.50,280.00" fill="none" stroke="#e2e2e2" stroke-width="1" stroke-linejoin="round" stroke-linecap="round" />
<polyline points="55.50,156.50 60.80,156.50" fill="none" stroke="#e2e2e2" stroke-width="1" stroke-linejoin="round" stroke-linecap="round" />
<polyline points="55.50,187.50 60.80,187.50" fill="none" stroke="#e2e2e2" stroke-width="1" stroke-linejoin="round" stroke-linecap="round" />
<polyline points="55.50,218.50 60.80,218.50" fill="none" stroke="#e2e2e2" stroke-width="1" stroke-linejoin="round" stroke-linecap="round" />
<polyline points="55.50,249.50 60.80,249.50" fill="none" stroke="#e2e2e2" stroke-width="1" stroke-linejoin="round" stroke-linecap="round" />
<polyline points="55.50,280.00 60.80,280.00" fill="none" stroke="#e2e2e2" stroke-width="1" stroke-linejoin="round" stroke-linecap="round" />
<polygon points="80.90,146.30 89.21,151.10 89.21,160.70 80.90,165.50 72.59,160.70 72.59,151.10" fill="#efefef" stroke="#cfcfcf" stroke-width="1.3" stroke-linejoin="round" /><polyline points="80.90,155.90 80.90,165.50" fill="none" stroke="#cfcfcf" stroke-width="1.1" stroke-linejoin="round" stroke-linecap="round" /><polyline points="72.59,151.10 80.90,155.90 89.21,151.10" fill="none" stroke="#dedede" stroke-width="0.9" stroke-linejoin="round" stroke-linecap="round" /><polygon points="80.90,155.80 75.10,152.45 80.90,149.10 86.70,152.45" fill="#bfe0ee" stroke="none" stroke-width="1" stroke-linejoin="round" /><polygon points="80.90,155.80 75.10,152.45 75.10,159.15 80.90,162.50" fill="#93c9e1" stroke="none" stroke-width="1" stroke-linejoin="round" /><polygon points="80.90,155.80 86.70,152.45 86.70,159.15 80.90,162.50" fill="#a9d4e8" stroke="none" stroke-width="1" stroke-linejoin="round" /><polygon points="75.10,152.45 80.90,149.10 86.70,152.45 86.70,159.15 80.90,162.50 75.10,159.15" fill="none" stroke="#2f8fc2" stroke-width="1.2" stroke-linejoin="round" /><polyline points="75.10,152.45 80.90,155.80 86.70,152.45" fill="none" stroke="#2f8fc2" stroke-width="1.2" stroke-linejoin="round" stroke-linecap="round" /><polyline points="80.90,155.80 80.90,162.50" fill="none" stroke="#2f8fc2" stroke-width="1.2" stroke-linejoin="round" stroke-linecap="round" />
<polygon points="80.30,186.70 73.89,183.00 80.30,179.30 86.71,183.00" fill="#b9dbea" stroke="none" stroke-width="1" stroke-linejoin="round" /><polygon points="80.30,186.70 73.89,183.00 73.89,190.40 80.30,194.10" fill="#8cc2dc" stroke="none" stroke-width="1" stroke-linejoin="round" /><polygon points="80.30,186.70 86.71,183.00 86.71,190.40 80.30,194.10" fill="#a7d0e4" stroke="none" stroke-width="1" stroke-linejoin="round" /><polygon points="73.89,183.00 80.30,179.30 86.71,183.00 86.71,190.40 80.30,194.10 73.89,190.40" fill="none" stroke="#1f7eb0" stroke-width="1.25" stroke-linejoin="round" /><polyline points="73.89,183.00 80.30,186.70 86.71,183.00" fill="none" stroke="#1f7eb0" stroke-width="1.25" stroke-linejoin="round" stroke-linecap="round" /><polyline points="80.30,186.70 80.30,194.10" fill="none" stroke="#1f7eb0" stroke-width="1.25" stroke-linejoin="round" stroke-linecap="round" /><circle cx="86.60" cy="192.50" r="4.40" fill="#fff"/><circle cx="86.60" cy="192.50" r="3.50" fill="#1b7db1"/><polyline points="85.13,191.03 88.07,193.97" fill="none" stroke="#fff" stroke-width="1.5" stroke-linejoin="round" stroke-linecap="round" /><polyline points="85.13,193.97 88.07,191.03" fill="none" stroke="#fff" stroke-width="1.5" stroke-linejoin="round" stroke-linecap="round" />
<polygon points="79.50,217.40 73.35,213.85 79.50,210.30 85.65,213.85" fill="#f1f1f1" stroke="none" stroke-width="1" stroke-linejoin="round" /><polygon points="79.50,217.40 73.35,213.85 73.35,220.95 79.50,224.50" fill="#e4e4e4" stroke="none" stroke-width="1" stroke-linejoin="round" /><polygon points="79.50,217.40 85.65,213.85 85.65,220.95 79.50,224.50" fill="#ececec" stroke="none" stroke-width="1" stroke-linejoin="round" /><polygon points="73.35,213.85 79.50,210.30 85.65,213.85 85.65,220.95 79.50,224.50 73.35,220.95" fill="none" stroke="#bdbdbd" stroke-width="0.9" stroke-linejoin="round" /><polyline points="73.35,213.85 79.50,217.40 85.65,213.85" fill="none" stroke="#bdbdbd" stroke-width="0.9" stroke-linejoin="round" stroke-linecap="round" /><polyline points="79.50,217.40 79.50,224.50" fill="none" stroke="#bdbdbd" stroke-width="0.9" stroke-linejoin="round" stroke-linecap="round" /><polyline points="79.50,217.40 79.50,210.30" fill="none" stroke="#dcdcdc" stroke-width="0.6" stroke-linejoin="round" stroke-linecap="round" /><polyline points="79.50,217.40 73.35,220.95" fill="none" stroke="#dcdcdc" stroke-width="0.6" stroke-linejoin="round" stroke-linecap="round" /><polyline points="79.50,217.40 85.65,220.95" fill="none" stroke="#dcdcdc" stroke-width="0.6" stroke-linejoin="round" stroke-linecap="round" /><polygon points="79.50,217.40 85.65,213.85 85.65,220.95 79.50,224.50" fill="#7db9d6" stroke="#1f7eb0" stroke-width="1.0" stroke-linejoin="round" /><polyline points="81.70,217.80 88.10,222.00" fill="none" stroke="#1f7eb0" stroke-width="1.2" stroke-linejoin="round" stroke-linecap="round" /><polygon points="88.80,222.60 85.80,222.40 87.40,220.20" fill="#1f7eb0" stroke="#1f7eb0" stroke-width="0.5" stroke-linejoin="round" />
<polygon points="79.50,248.40 73.35,244.85 79.50,241.30 85.65,244.85" fill="#f1f1f1" stroke="none" stroke-width="1" stroke-linejoin="round" /><polygon points="79.50,248.40 73.35,244.85 73.35,251.95 79.50,255.50" fill="#e4e4e4" stroke="none" stroke-width="1" stroke-linejoin="round" /><polygon points="79.50,248.40 85.65,244.85 85.65,251.95 79.50,255.50" fill="#ececec" stroke="none" stroke-width="1" stroke-linejoin="round" /><polygon points="73.35,244.85 79.50,241.30 85.65,244.85 85.65,251.95 79.50,255.50 73.35,251.95" fill="none" stroke="#bdbdbd" stroke-width="0.9" stroke-linejoin="round" /><polyline points="73.35,244.85 79.50,248.40 85.65,244.85" fill="none" stroke="#bdbdbd" stroke-width="0.9" stroke-linejoin="round" stroke-linecap="round" /><polyline points="79.50,248.40 79.50,255.50" fill="none" stroke="#bdbdbd" stroke-width="0.9" stroke-linejoin="round" stroke-linecap="round" /><polyline points="79.50,248.40 79.50,241.30" fill="none" stroke="#dcdcdc" stroke-width="0.6" stroke-linejoin="round" stroke-linecap="round" /><polyline points="79.50,248.40 73.35,251.95" fill="none" stroke="#dcdcdc" stroke-width="0.6" stroke-linejoin="round" stroke-linecap="round" /><polyline points="79.50,248.40 85.65,251.95" fill="none" stroke="#dcdcdc" stroke-width="0.6" stroke-linejoin="round" stroke-linecap="round" /><polygon points="79.50,248.40 85.65,244.85 85.65,251.95 79.50,255.50" fill="#7db9d6" stroke="#1f7eb0" stroke-width="1.0" stroke-linejoin="round" /><polyline points="81.70,248.80 88.10,253.00" fill="none" stroke="#1f7eb0" stroke-width="1.2" stroke-linejoin="round" stroke-linecap="round" /><polygon points="88.80,253.60 85.80,253.40 87.40,251.20" fill="#1f7eb0" stroke="#1f7eb0" stroke-width="0.5" stroke-linejoin="round" />
<polygon points="75.00,276.20 80.00,273.80 80.00,284.00 75.00,286.20" fill="#e0e0e0" stroke="#b9b9b9" stroke-width="0.8" stroke-linejoin="round" /><polygon points="76.00,275.40 86.80,271.40 86.80,282.60 76.00,286.80" fill="#8cc2dc" stroke="#1f7eb0" stroke-width="1.1" stroke-linejoin="round" /><polygon points="81.60,277.80 78.40,275.95 84.37,272.50 87.58,274.35" fill="#b9dbea" stroke="none" stroke-width="1" stroke-linejoin="round" /><polygon points="81.60,277.80 78.40,275.95 78.40,283.55 81.60,285.40" fill="#9ccbe1" stroke="none" stroke-width="1" stroke-linejoin="round" /><polygon points="81.60,277.80 87.58,274.35 87.58,281.95 81.60,285.40" fill="#a7d0e4" stroke="none" stroke-width="1" stroke-linejoin="round" /><polygon points="78.40,275.95 84.37,272.50 87.58,274.35 87.58,281.95 81.60,285.40 78.40,283.55" fill="none" stroke="#1f7eb0" stroke-width="1.1" stroke-linejoin="round" /><polyline points="78.40,275.95 81.60,277.80 87.58,274.35" fill="none" stroke="#1f7eb0" stroke-width="1.1" stroke-linejoin="round" stroke-linecap="round" /><polyline points="81.60,277.80 81.60,285.40" fill="none" stroke="#1f7eb0" stroke-width="1.1" stroke-linejoin="round" stroke-linecap="round" />
<polygon points="29.00,320.40 24.89,318.02 29.00,315.65 33.11,318.02" fill="#ead94c" stroke="none" stroke-width="1" stroke-linejoin="round" /><polygon points="29.00,320.40 24.89,318.02 24.89,322.77 29.00,325.15" fill="#1f7eb0" stroke="none" stroke-width="1" stroke-linejoin="round" /><polygon points="29.00,320.40 33.11,318.02 33.11,322.77 29.00,325.15" fill="#8fbf3f" stroke="none" stroke-width="1" stroke-linejoin="round" />
<polygon points="24.80,327.30 20.69,324.93 24.80,322.55 28.91,324.93" fill="#ead94c" stroke="none" stroke-width="1" stroke-linejoin="round" /><polygon points="24.80,327.30 20.69,324.93 20.69,329.68 24.80,332.05" fill="#1f7eb0" stroke="none" stroke-width="1" stroke-linejoin="round" /><polygon points="24.80,327.30 28.91,324.93 28.91,329.68 24.80,332.05" fill="#8fbf3f" stroke="none" stroke-width="1" stroke-linejoin="round" />
<polygon points="33.20,327.30 29.09,324.93 33.20,322.55 37.31,324.93" fill="#ead94c" stroke="none" stroke-width="1" stroke-linejoin="round" /><polygon points="33.20,327.30 29.09,324.93 29.09,329.68 33.20,332.05" fill="#1f7eb0" stroke="none" stroke-width="1" stroke-linejoin="round" /><polygon points="33.20,327.30 37.31,324.93 37.31,329.68 33.20,332.05" fill="#8fbf3f" stroke="none" stroke-width="1" stroke-linejoin="round" />
<circle cx="288.8" cy="323.4" r="7.6" fill="#fff" stroke="#dcdcdc" stroke-width="1"/><polyline points="285.80,323.40 291.80,323.40" fill="none" stroke="#555" stroke-width="1" stroke-linejoin="round" stroke-linecap="round" /><polyline points="288.80,320.40 288.80,326.40" fill="none" stroke="#555" stroke-width="1" stroke-linejoin="round" stroke-linecap="round" />
<polyline points="314.50,220.00 314.50,237.00" fill="none" stroke="#cfcfcf" stroke-width="1" stroke-linejoin="round" stroke-linecap="round" /><polyline points="317.50,220.00 317.50,237.00" fill="none" stroke="#cfcfcf" stroke-width="1" stroke-linejoin="round" stroke-linecap="round" /></svg>

<!-- ============ RIGHT PANEL ============ -->
<div class="panel" id="rp" style="left:1651px;top:69px;width:259px;height:191px;"></div>


<div class="hl" style="left:1652px;top:180px;width:257px;"></div>
<div class="hl" style="left:1652px;top:220px;width:257px;"></div>
<div class="panel" id="ai" style="left:1746px;top:265px;width:164px;height:44px;border-radius:4px;"></div>
<svg class="ico" style="left:0;top:0;position:absolute" width="1918" height="320" viewBox="0 0 1918 320"><polyline points="1666.00,87.70 1670.90,93.00 1675.80,87.70" fill="none" stroke="#5a5a5a" stroke-width="1.3" stroke-linejoin="round" stroke-linecap="round" />
<polyline points="1671.00,111.00 1671.00,119.50" fill="none" stroke="#d8d8d8" stroke-width="1" stroke-linejoin="round" stroke-linecap="round" />
<rect x="1665.5" y="119.5" width="11" height="11.5" fill="#fff" stroke="#e2e2e2" stroke-width="1"/>
<polyline points="1668.60,125.40 1673.40,125.40" fill="none" stroke="#444" stroke-width="1.2" stroke-linejoin="round" stroke-linecap="round" />
<polyline points="1698.50,142.00 1698.50,156.50 1703.00,156.50" fill="none" stroke="#dadada" stroke-width="1" stroke-linejoin="round" stroke-linecap="round" />
<polygon points="1723.60,155.60 1716.15,151.30 1723.60,147.00 1731.05,151.30" fill="#eeeeee" stroke="none" stroke-width="1" stroke-linejoin="round" /><polygon points="1723.60,155.60 1716.15,151.30 1716.15,159.90 1723.60,164.20" fill="#9f9f9f" stroke="none" stroke-width="1" stroke-linejoin="round" /><polygon points="1723.60,155.60 1731.05,151.30 1731.05,159.90 1723.60,164.20" fill="#cfcfcf" stroke="none" stroke-width="1" stroke-linejoin="round" />
<rect x="1874" y="236" width="22" height="9" rx="4.5" fill="#f3f3f3" stroke="#e2e2e2" stroke-width="0.8"/>
<circle cx="1878" cy="240.6" r="7.7" fill="#fff" stroke="#cfcfcf" stroke-width="1"/>
<polyline points="1644.30,180.00 1644.30,197.00" fill="none" stroke="#cfcfcf" stroke-width="1" stroke-linejoin="round" stroke-linecap="round" /><polyline points="1647.50,180.00 1647.50,197.00" fill="none" stroke="#cfcfcf" stroke-width="1" stroke-linejoin="round" stroke-linecap="round" />
<path d="M1770,280 h9.4 a1.2,1.2 0 0 1 1.2,1.2 v5.6 a1.2,1.2 0 0 1 -1.2,1.2 h-5.2 l-2.6,2.4 v-2.4 h-1.6 a1.2,1.2 0 0 1 -1.2,-1.2 v-5.6 a1.2,1.2 0 0 1 1.2,-1.2 z" fill="#555"/>
<path d="M1781.8,283.6 h3.6 a1.2,1.2 0 0 1 1.2,1.2 v5.4 a1.2,1.2 0 0 1 -1.2,1.2 h-1.2 v2.4 l-2.6,-2.4 h-4.6 a1.2,1.2 0 0 1 -1.2,-1.2 v-1 h4.8 a1.2,1.2 0 0 0 1.2,-1.2 z" fill="#555"/>
<rect x="1859.8" y="280.2" width="31.8" height="13.6" rx="6.8" fill="#fff" stroke="#dddddd" stroke-width="1"/></svg>


<!-- ============ VIEW TOOLBAR ============ -->
<svg class="ico" style="left:0;top:0;position:absolute" width="1918" height="130" viewBox="0 0 1918 130"><polyline points="942.50,79.50 942.50,112.00" fill="none" stroke="#e9e9e9" stroke-width="1" stroke-linejoin="round" stroke-linecap="round" />
<polyline points="990.60,79.50 990.60,112.00" fill="none" stroke="#e9e9e9" stroke-width="1" stroke-linejoin="round" stroke-linecap="round" />
<polyline points="1273.50,79.50 1273.50,112.00" fill="none" stroke="#e9e9e9" stroke-width="1" stroke-linejoin="round" stroke-linecap="round" />
<polyline points="1321.50,79.50 1321.50,112.00" fill="none" stroke="#e9e9e9" stroke-width="1" stroke-linejoin="round" stroke-linecap="round" />
<polyline points="1370.60,79.50 1370.60,112.00" fill="none" stroke="#e9e9e9" stroke-width="1" stroke-linejoin="round" stroke-linecap="round" />
<rect x="1039.5" y="74.5" width="41.6" height="42" rx="4" fill="#fafafa" stroke="#c6e1ef" stroke-width="1"/>
<rect x="1182.4" y="74.5" width="42.2" height="42" rx="4" fill="#fafafa" stroke="#c6e1ef" stroke-width="1"/>
<polygon points="964.60,94.90 957.59,90.85 964.60,86.80 971.61,90.85" fill="#ebebeb" stroke="none" stroke-width="1" stroke-linejoin="round" /><polygon points="964.60,94.90 957.59,90.85 957.59,98.95 964.60,103.00" fill="#959595" stroke="none" stroke-width="1" stroke-linejoin="round" /><polygon points="964.60,94.90 971.61,90.85 971.61,98.95 964.60,103.00" fill="#cfcfcf" stroke="none" stroke-width="1" stroke-linejoin="round" /><polygon points="964.60,86.80 971.61,90.85 971.61,98.95 964.60,103.00 957.59,98.95 957.59,90.85" fill="none" stroke="#a8a8a8" stroke-width="0.5" stroke-linejoin="round" /><polyline points="957.59,90.85 964.60,94.90 971.61,90.85" fill="none" stroke="#a8a8a8" stroke-width="0.5" stroke-linejoin="round" stroke-linecap="round" /><polyline points="964.60,94.90 964.60,103.00" fill="none" stroke="#a8a8a8" stroke-width="0.5" stroke-linejoin="round" stroke-linecap="round" />
<polyline points="975.20,109.00 978.60,109.00 978.60,106.20" fill="none" stroke="#8a8a8a" stroke-width="1" stroke-linejoin="round" stroke-linecap="round" />
<polygon points="1013.10,95.40 1006.43,91.55 1013.10,87.70 1019.77,91.55" fill="#f6b79d" stroke="none" stroke-width="1" stroke-linejoin="round" /><polygon points="1013.10,95.40 1006.43,91.55 1006.43,99.25 1013.10,103.10" fill="#e3601d" stroke="none" stroke-width="1" stroke-linejoin="round" /><polygon points="1013.10,95.40 1019.77,91.55 1019.77,99.25 1013.10,103.10" fill="#ef8757" stroke="none" stroke-width="1" stroke-linejoin="round" /><polygon points="1013.10,87.70 1019.77,91.55 1019.77,99.25 1013.10,103.10 1006.43,99.25 1006.43,91.55" fill="none" stroke="#111" stroke-width="1.0" stroke-linejoin="round" /><polyline points="1006.43,91.55 1013.10,95.40 1019.77,91.55" fill="none" stroke="#111" stroke-width="1.0" stroke-linejoin="round" stroke-linecap="round" /><polyline points="1013.10,95.40 1013.10,103.10" fill="none" stroke="#111" stroke-width="1.0" stroke-linejoin="round" stroke-linecap="round" /><circle cx="1013.10" cy="87.70" r="1.65" fill="#111"/><circle cx="1019.77" cy="91.55" r="1.65" fill="#111"/><circle cx="1019.77" cy="99.25" r="1.65" fill="#111"/><circle cx="1013.10" cy="103.10" r="1.65" fill="#111"/><circle cx="1006.43" cy="99.25" r="1.65" fill="#111"/><circle cx="1006.43" cy="91.55" r="1.65" fill="#111"/><circle cx="1013.10" cy="95.40" r="1.65" fill="#111"/>
<polygon points="1059.90,95.40 1053.23,91.55 1059.90,87.70 1066.57,91.55" fill="#fff" stroke="none" stroke-width="1" stroke-linejoin="round" /><polygon points="1059.90,95.40 1053.23,91.55 1053.23,99.25 1059.90,103.10" fill="#e3601d" stroke="none" stroke-width="1" stroke-linejoin="round" /><polygon points="1059.90,95.40 1066.57,91.55 1066.57,99.25 1059.90,103.10" fill="#fff" stroke="none" stroke-width="1" stroke-linejoin="round" /><polygon points="1059.90,87.70 1066.57,91.55 1066.57,99.25 1059.90,103.10 1053.23,99.25 1053.23,91.55" fill="none" stroke="#111" stroke-width="1.0" stroke-linejoin="round" /><polyline points="1053.23,91.55 1059.90,95.40 1066.57,91.55" fill="none" stroke="#111" stroke-width="1.0" stroke-linejoin="round" stroke-linecap="round" /><polyline points="1059.90,95.40 1059.90,103.10" fill="none" stroke="#111" stroke-width="1.0" stroke-linejoin="round" stroke-linecap="round" /><circle cx="1059.90" cy="87.70" r="1.65" fill="#111"/><circle cx="1066.57" cy="91.55" r="1.65" fill="#111"/><circle cx="1066.57" cy="99.25" r="1.65" fill="#111"/><circle cx="1059.90" cy="103.10" r="1.65" fill="#111"/><circle cx="1053.23" cy="99.25" r="1.65" fill="#111"/><circle cx="1053.23" cy="91.55" r="1.65" fill="#111"/><circle cx="1059.90" cy="95.40" r="1.65" fill="#111"/>
<polygon points="1107.00,87.70 1113.67,91.55 1113.67,99.25 1107.00,103.10 1100.33,99.25 1100.33,91.55" fill="none" stroke="#e8703a" stroke-width="1.0" stroke-linejoin="round" /><polyline points="1100.33,91.55 1107.00,95.40 1113.67,91.55" fill="none" stroke="#e8703a" stroke-width="1.0" stroke-linejoin="round" stroke-linecap="round" /><polyline points="1107.00,95.40 1107.00,103.10" fill="none" stroke="#e8703a" stroke-width="1.0" stroke-linejoin="round" stroke-linecap="round" /><circle cx="1107.00" cy="87.70" r="1.65" fill="#111"/><circle cx="1113.67" cy="91.55" r="1.65" fill="#111"/><circle cx="1113.67" cy="99.25" r="1.65" fill="#111"/><circle cx="1107.00" cy="103.10" r="1.65" fill="#111"/><circle cx="1100.33" cy="99.25" r="1.65" fill="#111"/><circle cx="1100.33" cy="91.55" r="1.65" fill="#111"/><circle cx="1107.00" cy="95.40" r="1.65" fill="#111"/>
<polygon points="1155.00,87.70 1161.67,91.55 1161.67,99.25 1155.00,103.10 1148.33,99.25 1148.33,91.55" fill="none" stroke="#555" stroke-width="1.0" stroke-linejoin="round" /><polyline points="1148.33,91.55 1155.00,95.40 1161.67,91.55" fill="none" stroke="#555" stroke-width="1.0" stroke-linejoin="round" stroke-linecap="round" /><polyline points="1155.00,95.40 1155.00,103.10" fill="none" stroke="#555" stroke-width="1.0" stroke-linejoin="round" stroke-linecap="round" /><polyline points="1155.00,95.40 1155.00,103.10" fill="none" stroke="#777" stroke-width="1.6" stroke-linejoin="round" stroke-linecap="round" /><circle cx="1155.00" cy="87.70" r="1.55" fill="#e8611f"/><circle cx="1161.67" cy="91.55" r="1.55" fill="#e8611f"/><circle cx="1161.67" cy="99.25" r="1.55" fill="#e8611f"/><circle cx="1155.00" cy="103.10" r="1.55" fill="#e8611f"/><circle cx="1148.33" cy="99.25" r="1.55" fill="#e8611f"/><circle cx="1148.33" cy="91.55" r="1.55" fill="#e8611f"/><circle cx="1155.00" cy="95.40" r="1.55" fill="#e8611f"/>
<circle cx="1203.5" cy="89.8" r="4.8" fill="#3c3c3c"/><polyline points="1203.50,94.00 1203.50,103.00" fill="none" stroke="#3c3c3c" stroke-width="1.1" stroke-linejoin="round" stroke-linecap="round" /><circle cx="1203.5" cy="103.3" r="1.5" fill="#3c3c3c"/>
<rect x="1243.6" y="89.7" width="12.8" height="9.6" fill="none" stroke="#111" stroke-width="1.4" stroke-dasharray="3.1,1.8"/>
<path d="M1254,97 L1254,104.4 L1255.8,102.8 L1257.2,105.6 L1258.4,105 L1257.1,102.3 L1259.4,102.2 Z" fill="#111" stroke="#fafafa" stroke-width="0.5"/>
<polygon points="1288.20,85.20 1299.60,93.20 1299.60,105.20 1288.20,97.40" fill="#d4d4d4" stroke="#b5b5b5" stroke-width="0.6" stroke-linejoin="round" />
<polygon points="1290.00,89.40 1297.60,93.80 1297.60,101.40 1290.00,96.60" fill="#8c8c8c" stroke="none" stroke-width="1" stroke-linejoin="round" /><polygon points="1290.00,89.40 1294.80,86.20 1302.00,90.40 1297.60,93.80" fill="#fbfbfb" stroke="none" stroke-width="1" stroke-linejoin="round" /><polygon points="1297.60,93.80 1302.00,90.40 1302.00,98.80 1297.60,101.40" fill="#e4e4e4" stroke="none" stroke-width="1" stroke-linejoin="round" />
<polygon points="1290.00,89.40 1294.80,86.20 1302.00,90.40 1302.00,98.80 1297.60,101.40 1290.00,96.60" fill="none" stroke="#4a4a4a" stroke-width="1" stroke-linejoin="round" /><polyline points="1290.00,89.40 1297.60,93.80 1302.00,90.40" fill="none" stroke="#4a4a4a" stroke-width="0.9" stroke-linejoin="round" stroke-linecap="round" /><polyline points="1297.60,93.80 1297.60,101.40" fill="none" stroke="#4a4a4a" stroke-width="0.9" stroke-linejoin="round" stroke-linecap="round" />
<path d="M1341.4,96.6 L1341.4,91.8 C1341.4,88.6 1344.2,86.6 1348.4,86.1 L1352.6,88.6 L1352.6,95.4 L1346.6,98.8 L1346.6,93.6 C1346.6,91.6 1348,89.6 1352.4,88.7" fill="none" stroke="#5a5a5a" stroke-width="1" stroke-linejoin="round"/>
<path d="M1341.4,91.8 C1341.6,93 1343.6,93.8 1346.6,93.6 M1341.4,96.6 L1335,100.6 L1338.4,103.4 L1346.6,98.8 M1337,99.6 L1340.2,102.2 M1339,98.4 L1342.2,101" fill="none" stroke="#5a5a5a" stroke-width="1" stroke-linejoin="round"/>
<g stroke="#c6c6c6" fill="none" stroke-width="1"><path d="M1382.6,100.6 L1395.6,88.2 L1398.2,90.6 L1385,103.2 Z M1392.6,91 L1395.2,93.6"/><path d="M1383.4,88.2 v4.4 M1381.2,90.4 h4.4 M1390.6,85.6 v2.6 M1389.3,86.9 h2.6"/></g>
<text x="1393.8" y="102.9" font-family="Liberation Sans, sans-serif" font-size="8.6" fill="#bdbdbd">AI</text></svg>


<!-- ============ SCALE BAR ============ -->
<div class="abs" style="left:882px;top:859.5px;width:154px;height:2.5px;background:#333;"></div>
<div class="abs" style="left:882px;top:856.5px;width:2px;height:5px;background:#333;"></div>
<div class="abs" style="left:1034px;top:856.5px;width:2px;height:5px;background:#333;"></div>

<div id="a1" class="grp" style="left:11.90px;top:22px;transform-origin:0 0;transform:scaleX(0.9376);">CREATE</div>
<div id="a2" class="tl" style="left:67.32px;top:36px;transform-origin:0 0;transform:scaleX(0.9895);">Flow volume</div>
<div id="a3" class="tl" style="left:151.19px;top:36px;transform-origin:0 0;transform:scaleX(1.0204);">Primitives</div>
<div id="a4" class="grp" style="left:239.04px;top:22px;transform-origin:0 0;transform:scaleX(0.9644);">FACE</div>
<div id="a5" class="tl" style="left:283.11px;top:36px;transform-origin:0 0;transform:scaleX(1.0198);">Delete</div>
<div id="a6" class="tl" style="left:333.52px;top:36px;transform-origin:0 0;transform:scaleX(1.0257);">Move</div>
<div id="a7" class="tl" style="left:377.54px;top:36px;transform-origin:0 0;transform:scaleX(1.0321);">Extrude</div>
<div id="a8" class="grp" style="left:443.86px;top:22px;transform-origin:0 0;transform:scaleX(1.0094);">BODY</div>
<div id="a9" class="tl" style="left:491.15px;top:36px;transform-origin:0 0;transform:scaleX(1.0218);">Delete</div>
<div id="a10" class="tl" style="left:537.03px;top:36px;transform-origin:0 0;transform:scaleX(0.9526);">Close sheet</div>
<div id="a11" class="tl" style="left:601.71px;top:36px;transform-origin:0 0;transform:scaleX(0.9787);">Facet split</div>
<div id="a12" class="tl" style="left:662.27px;top:36px;transform-origin:0 0;transform:scaleX(1.0574);">Imprint</div>
<div id="a13" class="tl" style="left:715.27px;top:36px;transform-origin:0 0;transform:scaleX(0.9487);">Scale</div>
<div id="a14" class="tl" style="left:765.42px;top:36px;transform-origin:0 0;transform:scaleX(1.0094);">Split</div>
<div id="a15" class="tl" style="left:809.29px;top:36px;transform-origin:0 0;transform:scaleX(0.9712);">Boolean</div>
<div id="a16" class="tl" style="left:875.89px;top:36px;transform-origin:0 0;transform:scaleX(0.9861);">Transform</div>
<div id="a17" class="tl" style="left:947.85px;top:36px;transform-origin:0 0;transform:scaleX(0.9961);">Simplify</div>
<div id="a18" class="tl" style="left:1003.60px;top:36px;transform-origin:0 0;transform:scaleX(1.0353);">Wrap</div>
<div id="a19" class="grp" style="left:1063.05px;top:22px;transform-origin:0 0;transform:scaleX(1.0193);">MODEL</div>
<div id="a20" class="tl" style="left:1117.32px;top:36px;transform-origin:0 0;transform:scaleX(0.9966);">Fix interferences</div>
<div id="a21" class="tl" style="left:1206.00px;top:36px;transform-origin:0 0;transform:scaleX(0.9751);">Add CAD</div>
<div id="a22" class="grp" style="left:1278.49px;top:22px;transform-origin:0 0;transform:scaleX(0.9396);">TOOLS</div>
<div id="a23" class="tl" style="left:1332.68px;top:36px;transform-origin:0 0;transform:scaleX(0.9379);">Gaps</div>
<div id="a24" class="tl" style="left:1375.14px;top:36px;transform-origin:0 0;transform:scaleX(1.0151);">Interferences</div>
<div id="b1" class="t13 sb" style="left:70.55px;top:83.0px;transform-origin:0 0;transform:scaleX(1.0089);">GEOMETRIES</div>
<div id="b2" class="t13" style="left:70.45px;top:118.5px;transform-origin:0 0;transform:scaleX(1.0629);">Full model - Non-return valve</div>
<div id="b3" class="t13" style="left:96.68px;top:149.5px;transform-origin:0 0;transform:scaleX(1.0912);">Internal flow volume</div>
<div id="b4" class="t13" style="left:96.87px;top:180.0px;transform-origin:0 0;transform:scaleX(1.0611);">Delete bodies</div>
<div id="b5" class="t13" style="left:96.37px;top:210.5px;transform-origin:0 0;transform:scaleX(1.0952);">Move</div>
<div id="b6" class="t13" style="left:96.37px;top:241.5px;transform-origin:0 0;transform:scaleX(1.0952);">Move</div>
<div id="b7" class="t13" style="left:96.34px;top:272.5px;transform-origin:0 0;transform:scaleX(1.0514);">Split</div>
<div id="b8" class="t13 sb" style="left:43.82px;top:316.0px;transform-origin:0 0;transform:scaleX(1.0546);">SIMULATIONS (0)</div>
<div id="b9" class="abs" style="left:20.04px;top:357.7px;transform-origin:0 0;transform:scaleX(0.9331);font-size:16px;line-height:20px;font-weight:bold;color:#2f2f2f;white-space:nowrap;">Job status</div>
<div id="c1" class="t13 sb" style="left:1686.59px;top:83.0px;transform-origin:0 0;transform:scaleX(1.0241);">GEOMETRY</div>
<div id="c2" class="t13" style="left:1686.49px;top:118.5px;transform-origin:0 0;transform:scaleX(1.0203);font-weight:bold;color:#333;-webkit-text-stroke:0;">Full model - Non-return val...</div>
<div id="c3" class="t13" style="left:1739.14px;top:149.5px;transform-origin:0 0;transform:scaleX(1.0863);">Flow region</div>
<div id="c4" class="t13" style="left:1659.07px;top:193.0px;transform-origin:0 0;transform:scaleX(1.0053);font-weight:bold;color:#a0a0a0;-webkit-text-stroke:0;">SAVED SELECTIONS</div>
<div id="c5" class="t13" style="left:1663.69px;top:233.5px;transform-origin:0 0;transform:scaleX(1.0268);">Show faces</div>
<div id="c6" class="abs" style="left:1796.00px;top:276.4px;transform-origin:0 0;transform:scaleX(1.0286);font-size:15px;line-height:20px;color:#2f2f2f;white-space:nowrap;">AI Agent</div>
<div id="c7" class="abs" style="left:1863.55px;top:281.5px;transform-origin:0 0;transform:scaleX(0.9869);font-size:9px;line-height:11px;color:#333;white-space:nowrap;">BETA</div>
<div id="d1" class="abs" style="left:941.84px;top:869px;transform-origin:0 0;transform:scaleX(1.0658);font-size:13px;line-height:16px;color:#444;white-space:nowrap;">0.1 m</div>
<svg class="ico" style="left:0;top:0;position:absolute" width="1918" height="885" viewBox="0 0 1918 885"><defs><filter id="sh" x="-50%" y="-50%" width="200%" height="200%"><feGaussianBlur stdDeviation="5"/></filter></defs>
<circle cx="1870.8" cy="660.5" r="27" fill="#000" opacity="0.16" filter="url(#sh)"/>
<circle cx="1870.8" cy="658.2" r="26.4" fill="#0c72a3"/>
<path d="M1861,644.8 h19.2 a2.6,2.6 0 0 1 2.6,2.6 v22.6 l-4.2,-2.8 h-17.6 a2.6,2.6 0 0 1 -2.6,-2.6 v-17.2 a2.6,2.6 0 0 1 2.6,-2.6 z" fill="#fff"/>
<path d="M1864,659.4 C1867.6,662.6 1873.6,662.6 1877.4,659.4" fill="none" stroke="#0c72a3" stroke-width="1.5" stroke-linecap="round"/>
<polygon points="1802.70,728.60 1762.40,751.90 1815.10,767.00 1854.60,745.50" fill="rgba(255,255,255,0.55)" stroke="none" stroke-width="1" stroke-linejoin="round" /><polygon points="1762.40,751.90 1815.10,767.00 1815.10,828.00 1763.10,811.10" fill="rgba(255,255,255,0.55)" stroke="none" stroke-width="1" stroke-linejoin="round" /><polygon points="1815.10,767.00 1854.60,745.50 1854.60,805.40 1815.10,828.00" fill="rgba(255,255,255,0.55)" stroke="none" stroke-width="1" stroke-linejoin="round" />
<polyline points="1802.70,728.60 1802.70,788.00" fill="none" stroke="#cfcfcf" stroke-width="0.9" stroke-linejoin="round" stroke-linecap="round" stroke-dasharray="2.5,2.5"/><polyline points="1763.10,811.10 1802.70,788.00 1854.60,805.40" fill="none" stroke="#cfcfcf" stroke-width="0.9" stroke-linejoin="round" stroke-linecap="round" stroke-dasharray="2.5,2.5"/>
<polygon points="1802.70,728.60 1762.40,751.90 1763.10,811.10 1815.10,828.00 1854.60,805.40 1854.60,745.50" fill="none" stroke="#b2b2b2" stroke-width="1.5" stroke-linejoin="round" /><polyline points="1762.40,751.90 1815.10,767.00 1854.60,745.50" fill="none" stroke="#b2b2b2" stroke-width="1.5" stroke-linejoin="round" stroke-linecap="round" /><polyline points="1815.10,767.00 1815.10,828.00" fill="none" stroke="#b2b2b2" stroke-width="1.5" stroke-linejoin="round" stroke-linecap="round" />
<text transform="translate(1791.6,806) rotate(-79) skewX(-8)" font-family="Liberation Sans, sans-serif" font-size="7" font-style="italic" fill="#8e8e8e">FRONT</text>
<text transform="translate(1826.6,793.6) rotate(-24) skewX(-14)" font-family="Liberation Sans, sans-serif" font-size="7" font-style="italic" fill="#8e8e8e">RIGHT</text>
<text transform="translate(1816,744.4) rotate(166) skewX(20)" font-family="Liberation Sans, sans-serif" font-size="6.4" font-style="italic" fill="#9c9c9c">TOP</text>
<polyline points="1815.10,833.70 1814.70,748.00" fill="none" stroke="#7a7cf2" stroke-width="1.3" stroke-linejoin="round" stroke-linecap="round" /><polygon points="1814.60,742.60 1812.90,750.00 1816.40,750.00" fill="#7a7cf2" stroke="none" stroke-width="1" stroke-linejoin="round" />
<polyline points="1815.10,833.70 1874.00,801.60" fill="none" stroke="#f46a6a" stroke-width="1.2" stroke-linejoin="round" stroke-linecap="round" /><polygon points="1877.40,799.70 1870.40,801.20 1872.20,804.40" fill="#f46a6a" stroke="none" stroke-width="1" stroke-linejoin="round" />
<polyline points="1815.10,833.70 1738.40,809.80" fill="none" stroke="#6be25a" stroke-width="1.2" stroke-linejoin="round" stroke-linecap="round" /><polygon points="1734.80,808.70 1741.60,808.80 1740.60,812.20" fill="#6be25a" stroke="none" stroke-width="1" stroke-linejoin="round" />
<text x="1810.6" y="734" font-family="Liberation Sans, sans-serif" font-size="15" stroke="#6c6ef0" stroke-width="0.25" fill="#6c6ef0">z</text>
<text x="1880.6" y="798.2" font-family="Liberation Sans, sans-serif" font-size="15.5" stroke="#f25858" stroke-width="0.25" fill="#f25858">x</text>
<text x="1722.4" y="805.8" font-family="Liberation Sans, sans-serif" font-size="15.5" stroke="#59dd48" stroke-width="0.25" fill="#59dd48">y</text>
<polyline points="1806.00,697.60 1811.10,693.00 1816.20,697.60" fill="none" stroke="#868686" stroke-width="1.3" stroke-linejoin="round" stroke-linecap="round" />
<polyline points="1806.00,858.80 1811.10,863.40 1816.20,858.80" fill="none" stroke="#868686" stroke-width="1.3" stroke-linejoin="round" stroke-linecap="round" />
<polyline points="1731.00,772.60 1726.40,777.80 1731.00,783.00" fill="none" stroke="#868686" stroke-width="1.3" stroke-linejoin="round" stroke-linecap="round" />
<polyline points="1892.00,772.60 1896.60,777.80 1892.00,783.00" fill="none" stroke="#868686" stroke-width="1.3" stroke-linejoin="round" stroke-linecap="round" />
<path d="M1858.8,724.4 L1865.2,718.2 L1871.6,724.4 M1860.6,723.2 V729.8 H1863.6 V725.8 H1866.8 V729.8 H1869.8 V723.2" fill="none" stroke="#868686" stroke-width="1.2" stroke-linejoin="round" stroke-linecap="round"/>
<path d="M1754.6,828.6 A6.4,6.4 0 1 1 1747.6,838.2" fill="none" stroke="#868686" stroke-width="1.2"/><polygon points="1745.40,833.40 1750.60,836.60 1746.20,839.60" fill="#868686" stroke="none" stroke-width="1" stroke-linejoin="round" />
<path d="M1864,828.6 A6.4,6.4 0 1 0 1871,838.2" fill="none" stroke="#868686" stroke-width="1.2"/><polygon points="1873.20,833.40 1868.00,836.60 1872.40,839.60" fill="#868686" stroke="none" stroke-width="1" stroke-linejoin="round" /></svg>


</body>
</html>
